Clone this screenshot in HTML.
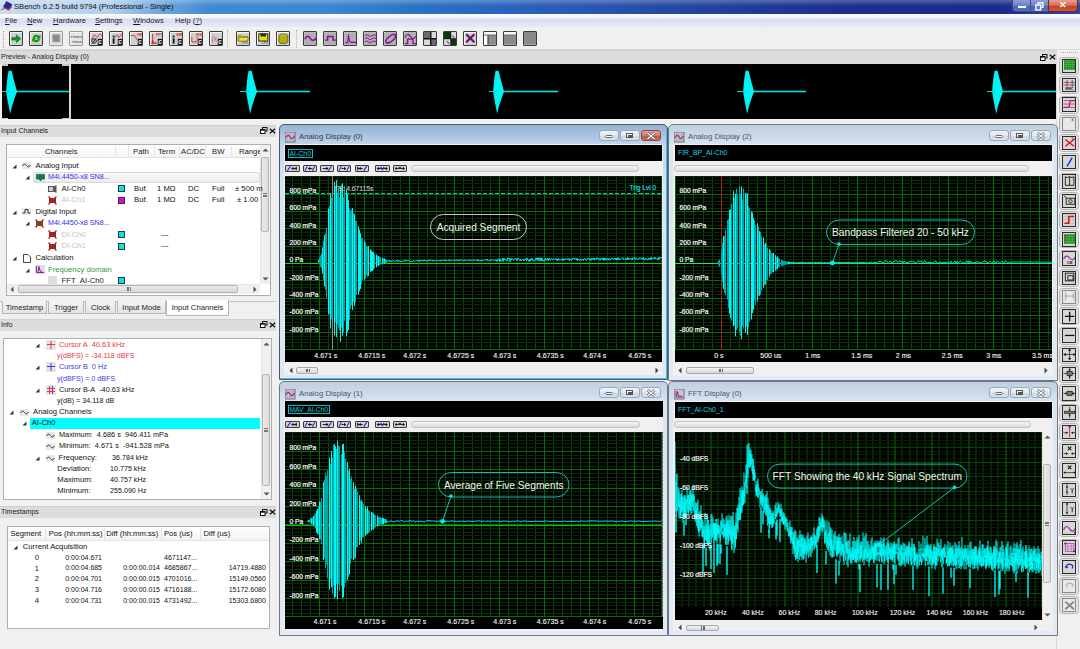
<!DOCTYPE html><html><head><meta charset="utf-8"><style>
html,body{margin:0;padding:0;}
body{width:1080px;height:649px;overflow:hidden;position:relative;background:#f0f0f0;font-family:"Liberation Sans", sans-serif;}
div{box-sizing:border-box;}
svg{position:absolute;}
</style></head><body>
<div style="position:absolute;left:0px;top:0px;width:1080px;height:13.5px;background:linear-gradient(90deg,#c8dcf0 0px,#b4d0ee 110px,#70a8de 160px,#3f8ad2 210px,#3a86d0 330px,#2a72c4 420px,#2a64c0 500px,#2a55b0 600px,#2244a0 700px,#1c2e90 850px,#1a2a8a 1000px,#3048a0 1080px);"></div>
<div style="position:absolute;left:0px;top:0px;width:1080px;height:6px;background:linear-gradient(180deg,rgba(255,255,255,0.25),rgba(255,255,255,0));"></div>
<svg style="left:1px;top:1px" width="12" height="11" viewBox="0 0 12 11"><rect x="3" y="1" width="7" height="7" transform="rotate(30 6 5)" fill="#2a2aa0"/><path d="M0 9 L4 7 L7 9 L11 6" stroke="#e03030" stroke-width="1" fill="none"/></svg>
<div style="position:absolute;left:14px;top:1.5px;font-size:7.6px;line-height:9.6px;color:#101010;white-space:nowrap;">SBench 6.2.5 build 9794 (Professional - Single)</div>
<div style="position:absolute;left:1012px;top:0px;width:66px;height:12px;border:1px solid #3a4a7a;border-top:none;border-radius:0 0 4px 4px;background:linear-gradient(180deg,#8e9ed8 0%,#6e80c8 50%,#4a5fb5 51%,#5a70c0 100%);"></div>
<div style="position:absolute;left:1048px;top:0px;width:30px;height:12px;border:1px solid #6a2a2a;border-top:none;border-radius:0 0 4px 0;background:linear-gradient(180deg,#e8a090 0%,#d86a55 50%,#c23a22 51%,#d05a40 100%);"></div>
<div style="position:absolute;left:1030px;top:0px;width:1px;height:11px;background:#3a4a7a;"></div>
<div style="position:absolute;left:1018px;top:6px;width:8px;height:2px;background:#fff;"></div>
<svg style="left:1035px;top:1.5px" width="9" height="9" viewBox="0 0 9 9"><rect x="3" y="0.8" width="5" height="4.5" fill="none" stroke="#fff" stroke-width="1.3"/><rect x="0.8" y="3" width="5" height="5" fill="#6a7ac4" stroke="#fff" stroke-width="1.3"/></svg>
<div style="position:absolute;left:963px;top:0.0px;width:200px;text-align:center;font-size:9px;line-height:11px;color:#fff;white-space:nowrap;font-weight:bold;">✕</div>
<div style="position:absolute;left:0px;top:13.5px;width:1080px;height:14.5px;background:linear-gradient(180deg,#fafbfd 0%,#f2f4fa 28%,#d8deef 42%,#dce2f2 60%,#e6eaf6 100%);border-bottom:1px solid #c8ccd6;"></div>
<div style="position:absolute;left:5px;top:15.5px;font-size:7.6px;line-height:9.6px;color:#1a1a1a;white-space:nowrap;"><u>F</u>ile</div>
<div style="position:absolute;left:27px;top:15.5px;font-size:7.6px;line-height:9.6px;color:#1a1a1a;white-space:nowrap;"><u>N</u>ew</div>
<div style="position:absolute;left:53px;top:15.5px;font-size:7.6px;line-height:9.6px;color:#1a1a1a;white-space:nowrap;"><u>H</u>ardware</div>
<div style="position:absolute;left:95px;top:15.5px;font-size:7.6px;line-height:9.6px;color:#1a1a1a;white-space:nowrap;"><u>S</u>ettings</div>
<div style="position:absolute;left:133px;top:15.5px;font-size:7.6px;line-height:9.6px;color:#1a1a1a;white-space:nowrap;"><u>W</u>indows</div>
<div style="position:absolute;left:175px;top:15.5px;font-size:7.6px;line-height:9.6px;color:#1a1a1a;white-space:nowrap;">Help (<u>?</u>)</div>
<div style="position:absolute;left:0px;top:27px;width:1080px;height:23px;background:#f0f0f0;border-bottom:1px solid #dadada;"></div>
<div style="position:absolute;left:3px;top:31px;width:1px;height:1px;background:#a0a0a0;"></div>
<div style="position:absolute;left:3px;top:33px;width:1px;height:1px;background:#a0a0a0;"></div>
<div style="position:absolute;left:3px;top:35px;width:1px;height:1px;background:#a0a0a0;"></div>
<div style="position:absolute;left:3px;top:37px;width:1px;height:1px;background:#a0a0a0;"></div>
<div style="position:absolute;left:3px;top:39px;width:1px;height:1px;background:#a0a0a0;"></div>
<div style="position:absolute;left:3px;top:41px;width:1px;height:1px;background:#a0a0a0;"></div>
<div style="position:absolute;left:3px;top:43px;width:1px;height:1px;background:#a0a0a0;"></div>
<div style="position:absolute;left:3px;top:45px;width:1px;height:1px;background:#a0a0a0;"></div>
<div style="position:absolute;left:3px;top:47px;width:1px;height:1px;background:#a0a0a0;"></div>
<div style="position:absolute;left:9px;top:31px;width:14px;height:15px;border:1px solid #3c3c3c;border-radius:1px;background:#d0d0d0;box-shadow:inset 1px 1px 0 #f4f4f4;overflow:hidden;"><svg style="left:-0.5px;top:-0.5px" width="12" height="13" viewBox="0 0 12 13"><g transform="scale(0.9)"><path d="M2 6 H7 V3 L12 7.5 L7 12 V9 H2Z" fill="#0a9a0a" stroke="#064" stroke-width="0.6"/></g></svg></div>
<div style="position:absolute;left:29px;top:31px;width:14px;height:15px;border:1px solid #3c3c3c;border-radius:1px;background:#d0d0d0;box-shadow:inset 1px 1px 0 #f4f4f4;overflow:hidden;"><svg style="left:-0.5px;top:-0.5px" width="12" height="13" viewBox="0 0 12 13"><g transform="scale(0.9)"><path d="M3 7 A4 4 0 0 1 10 4.5 L11.5 3 V7.5 H7 L8.6 5.9 A2.3 2.3 0 0 0 5 7Z" fill="#0a9a0a"/><path d="M11 7.5 A4 4 0 0 1 4 10 L2.5 11.5 V7 H7 L5.4 8.6 A2.3 2.3 0 0 0 9 7.5Z" fill="#0a9a0a"/></g></svg></div>
<div style="position:absolute;left:49px;top:31px;width:14px;height:15px;border:1px solid #9a9a9a;border-radius:1px;background:#e4e4e4;box-shadow:inset 1px 1px 0 #f4f4f4;overflow:hidden;"><svg style="left:-0.5px;top:-0.5px" width="12" height="13" viewBox="0 0 12 13"><g transform="scale(0.9)"><rect x="3" y="3" width="8" height="8" fill="#8a8a8a" stroke="#aaa"/></g></svg></div>
<div style="position:absolute;left:69px;top:31px;width:14px;height:15px;border:1px solid #9a9a9a;border-radius:1px;background:#e4e4e4;box-shadow:inset 1px 1px 0 #f4f4f4;overflow:hidden;"><svg style="left:-0.5px;top:-0.5px" width="12" height="13" viewBox="0 0 12 13"><g transform="scale(0.9)"><text x="0.5" y="6.5" font-size="4.6" fill="#777" font-family="Liberation Mono" font-weight="bold">FORCE</text><text x="2" y="12" font-size="4.6" fill="#777" font-family="Liberation Mono" font-weight="bold">TRIG</text></g></svg></div>
<div style="position:absolute;left:89px;top:31px;width:14px;height:15px;border:1px solid #3c3c3c;border-radius:1px;background:#d0d0d0;box-shadow:inset 1px 1px 0 #f4f4f4;overflow:hidden;"><svg style="left:-0.5px;top:-0.5px" width="12" height="13" viewBox="0 0 12 13"><g transform="scale(0.9)"><path d="M1 9 L5 3 L8 6 L11 2 L14 5" stroke="#e02020" fill="none" stroke-width="0.9"/><circle cx="4.5" cy="10" r="2.5" stroke="#111" fill="none" stroke-width="1"/><path d="M2 13 L7 7" stroke="#111"/><rect x="8" y="7" width="7" height="8" fill="#f0f0f0"/><rect x="8.5" y="7.5" width="6" height="7" fill="#111"/><text x="9.3" y="13.6" font-size="7" fill="#fff" font-family="Liberation Sans" font-weight="bold">c</text></g></svg></div>
<div style="position:absolute;left:109px;top:31px;width:14px;height:15px;border:1px solid #3c3c3c;border-radius:1px;background:#d0d0d0;box-shadow:inset 1px 1px 0 #f4f4f4;overflow:hidden;"><svg style="left:-0.5px;top:-0.5px" width="12" height="13" viewBox="0 0 12 13"><g transform="scale(0.9)"><path d="M5 7 L8 3 L10 6 L13 2" stroke="#e02020" fill="none" stroke-width="0.9"/><rect x="3" y="4" width="2" height="2" fill="#111"/><rect x="3" y="7" width="2" height="6" fill="#111"/><rect x="8" y="7" width="7" height="8" fill="#f0f0f0"/><rect x="8.5" y="7.5" width="6" height="7" fill="#111"/><text x="9.3" y="13.6" font-size="7" fill="#fff" font-family="Liberation Sans" font-weight="bold">c</text></g></svg></div>
<div style="position:absolute;left:129px;top:31px;width:14px;height:15px;border:1px solid #3c3c3c;border-radius:1px;background:#d0d0d0;box-shadow:inset 1px 1px 0 #f4f4f4;overflow:hidden;"><svg style="left:-0.5px;top:-0.5px" width="12" height="13" viewBox="0 0 12 13"><g transform="scale(0.9)"><path d="M1 4 H5 L9 10 H11" stroke="#e02020" fill="none" stroke-width="1"/><text x="8" y="4" font-size="3.5" fill="#e02020" font-family="Liberation Sans" font-weight="bold">FIR</text><rect x="8" y="7" width="7" height="8" fill="#f0f0f0"/><rect x="8.5" y="7.5" width="6" height="7" fill="#111"/><text x="9.3" y="13.6" font-size="7" fill="#fff" font-family="Liberation Sans" font-weight="bold">c</text></g></svg></div>
<div style="position:absolute;left:149px;top:31px;width:14px;height:15px;border:1px solid #3c3c3c;border-radius:1px;background:#d0d0d0;box-shadow:inset 1px 1px 0 #f4f4f4;overflow:hidden;"><svg style="left:-0.5px;top:-0.5px" width="12" height="13" viewBox="0 0 12 13"><g transform="scale(0.9)"><path d="M3 13 V2 M2 13 L3 9 L4 13Z M5 13 L6 11 L7 13" stroke="#e02020" fill="#e02020" stroke-width="1"/><text x="7" y="4" font-size="3.5" fill="#e02020" font-family="Liberation Sans" font-weight="bold">FFT</text><rect x="8" y="7" width="7" height="8" fill="#f0f0f0"/><rect x="8.5" y="7.5" width="6" height="7" fill="#111"/><text x="9.3" y="13.6" font-size="7" fill="#fff" font-family="Liberation Sans" font-weight="bold">c</text></g></svg></div>
<div style="position:absolute;left:169px;top:31px;width:14px;height:15px;border:1px solid #3c3c3c;border-radius:1px;background:#d0d0d0;box-shadow:inset 1px 1px 0 #f4f4f4;overflow:hidden;"><svg style="left:-0.5px;top:-0.5px" width="12" height="13" viewBox="0 0 12 13"><g transform="scale(0.9)"><rect x="3" y="4" width="2" height="2" fill="#111"/><rect x="3" y="7" width="2" height="6" fill="#111"/><text x="7" y="4" font-size="3.5" fill="#e02020" font-family="Liberation Sans" font-weight="bold">SMP</text><rect x="8" y="7" width="7" height="8" fill="#f0f0f0"/><rect x="8.5" y="7.5" width="6" height="7" fill="#111"/><text x="9.3" y="13.6" font-size="7" fill="#fff" font-family="Liberation Sans" font-weight="bold">c</text></g></svg></div>
<div style="position:absolute;left:189px;top:31px;width:14px;height:15px;border:1px solid #3c3c3c;border-radius:1px;background:#d0d0d0;box-shadow:inset 1px 1px 0 #f4f4f4;overflow:hidden;"><svg style="left:-0.5px;top:-0.5px" width="12" height="13" viewBox="0 0 12 13"><g transform="scale(0.9)"><path d="M2 5 V11 H8 V5" stroke="#e02020" fill="none" stroke-width="1"/><text x="7" y="4" font-size="3.5" fill="#e02020" font-family="Liberation Sans" font-weight="bold">HIST</text><rect x="8" y="7" width="7" height="8" fill="#f0f0f0"/><rect x="8.5" y="7.5" width="6" height="7" fill="#111"/><text x="9.3" y="13.6" font-size="7" fill="#fff" font-family="Liberation Sans" font-weight="bold">c</text></g></svg></div>
<div style="position:absolute;left:209px;top:31px;width:14px;height:15px;border:1px solid #3c3c3c;border-radius:1px;background:#d0d0d0;box-shadow:inset 1px 1px 0 #f4f4f4;overflow:hidden;"><svg style="left:-0.5px;top:-0.5px" width="12" height="13" viewBox="0 0 12 13"><g transform="scale(0.9)"><text x="2" y="10" font-size="8" fill="#e04040" font-family="Liberation Serif" font-style="italic">fx</text><rect x="8" y="7" width="7" height="8" fill="#f0f0f0"/><rect x="8.5" y="7.5" width="6" height="7" fill="#111"/><text x="9.3" y="13.6" font-size="7" fill="#fff" font-family="Liberation Sans" font-weight="bold">c</text></g></svg></div>
<div style="position:absolute;left:227px;top:30px;width:1px;height:18px;border-left:1px dotted #b0b0b0;"></div>
<div style="position:absolute;left:236px;top:31px;width:14px;height:15px;border:1px solid #3c3c3c;border-radius:1px;background:#d0d0d0;box-shadow:inset 1px 1px 0 #f4f4f4;overflow:hidden;"><svg style="left:-0.5px;top:-0.5px" width="12" height="13" viewBox="0 0 12 13"><g transform="scale(0.9)"><path d="M1 4 H5 L6 5 H12 V10 H1Z" fill="#d8c000" stroke="#6a5a00" stroke-width="0.6"/><path d="M1 10 L3 6 H13 L11 10Z" fill="#f0e040" stroke="#6a5a00" stroke-width="0.6"/><text x="5" y="13.5" font-size="3.5" fill="#333" font-family="Liberation Sans">CFG</text></g></svg></div>
<div style="position:absolute;left:256px;top:31px;width:14px;height:15px;border:1px solid #3c3c3c;border-radius:1px;background:#d0d0d0;box-shadow:inset 1px 1px 0 #f4f4f4;overflow:hidden;"><svg style="left:-0.5px;top:-0.5px" width="12" height="13" viewBox="0 0 12 13"><g transform="scale(0.9)"><rect x="2" y="2" width="10" height="8" fill="#e8e000" stroke="#222" stroke-width="1"/><rect x="4" y="2" width="6" height="3" fill="#222"/><text x="5" y="13.5" font-size="3.5" fill="#333" font-family="Liberation Sans">CFG</text></g></svg></div>
<div style="position:absolute;left:276px;top:31px;width:14px;height:15px;border:1px solid #3c3c3c;border-radius:1px;background:#d0d0d0;box-shadow:inset 1px 1px 0 #f4f4f4;overflow:hidden;"><svg style="left:-0.5px;top:-0.5px" width="12" height="13" viewBox="0 0 12 13"><g transform="scale(0.9)"><ellipse cx="7" cy="4" rx="5" ry="1.8" fill="#d8d020" stroke="#333" stroke-width="0.7"/><path d="M2 4 V11 A5 1.8 0 0 0 12 11 V4" fill="#b8b000" stroke="#333" stroke-width="0.7"/></g></svg></div>
<div style="position:absolute;left:296px;top:30px;width:1px;height:18px;border-left:1px dotted #b0b0b0;"></div>
<div style="position:absolute;left:303px;top:31px;width:14px;height:15px;border:1px solid #3c3c3c;border-radius:1px;background:#d0d0d0;box-shadow:inset 1px 1px 0 #f4f4f4;overflow:hidden;"><svg style="left:-0.5px;top:-0.5px" width="12" height="13" viewBox="0 0 12 13"><g transform="scale(0.9)"><rect x="0" y="0" width="15" height="15" fill="#c4c4c4"/><path d="M0 2.5H15M0 5H15M0 7.5H15M0 10H15M0 12.5H15M2.5 0V15M5 0V15M7.5 0V15M10 0V15M12.5 0V15" stroke="#8c8c8c" stroke-width="0.5"/><path d="M1 8 Q4 2 7 7 T14 6" stroke="#8a0a9a" fill="none" stroke-width="1.7"/></g></svg></div>
<div style="position:absolute;left:323px;top:31px;width:14px;height:15px;border:1px solid #3c3c3c;border-radius:1px;background:#d0d0d0;box-shadow:inset 1px 1px 0 #f4f4f4;overflow:hidden;"><svg style="left:-0.5px;top:-0.5px" width="12" height="13" viewBox="0 0 12 13"><g transform="scale(0.9)"><rect x="0" y="0" width="15" height="15" fill="#c4c4c4"/><path d="M0 2.5H15M0 5H15M0 7.5H15M0 10H15M0 12.5H15M2.5 0V15M5 0V15M7.5 0V15M10 0V15M12.5 0V15" stroke="#8c8c8c" stroke-width="0.5"/><path d="M1 9 H4 V5 H10 V9 H14" stroke="#8a0a9a" fill="none" stroke-width="1.6"/></g></svg></div>
<div style="position:absolute;left:343px;top:31px;width:14px;height:15px;border:1px solid #3c3c3c;border-radius:1px;background:#d0d0d0;box-shadow:inset 1px 1px 0 #f4f4f4;overflow:hidden;"><svg style="left:-0.5px;top:-0.5px" width="12" height="13" viewBox="0 0 12 13"><g transform="scale(0.9)"><rect x="0" y="0" width="15" height="15" fill="#c4c4c4"/><path d="M0 2.5H15M0 5H15M0 7.5H15M0 10H15M0 12.5H15M2.5 0V15M5 0V15M7.5 0V15M10 0V15M12.5 0V15" stroke="#8c8c8c" stroke-width="0.5"/><path d="M1 12 H4 L5 3 L6 10 L8 11.5 L14 11.5" stroke="#8a0a9a" fill="none" stroke-width="1.2"/></g></svg></div>
<div style="position:absolute;left:363px;top:31px;width:14px;height:15px;border:1px solid #3c3c3c;border-radius:1px;background:#d0d0d0;box-shadow:inset 1px 1px 0 #f4f4f4;overflow:hidden;"><svg style="left:-0.5px;top:-0.5px" width="12" height="13" viewBox="0 0 12 13"><g transform="scale(0.9)"><rect x="0" y="0" width="15" height="15" fill="#c4c4c4"/><path d="M0 2.5H15M0 5H15M0 7.5H15M0 10H15M0 12.5H15M2.5 0V15M5 0V15M7.5 0V15M10 0V15M12.5 0V15" stroke="#8c8c8c" stroke-width="0.5"/><path d="M1 4 Q3 2 5 4 T9 4 T14 4 M1 7.5 Q3 5.5 5 7.5 T9 7.5 T14 7.5 M1 11 Q3 9 5 11 T9 11 T14 11" stroke="#8a0a9a" fill="none" stroke-width="1"/></g></svg></div>
<div style="position:absolute;left:383px;top:31px;width:14px;height:15px;border:1px solid #3c3c3c;border-radius:1px;background:#d0d0d0;box-shadow:inset 1px 1px 0 #f4f4f4;overflow:hidden;"><svg style="left:-0.5px;top:-0.5px" width="12" height="13" viewBox="0 0 12 13"><g transform="scale(0.9)"><rect x="0" y="0" width="15" height="15" fill="#c4c4c4"/><path d="M0 2.5H15M0 5H15M0 7.5H15M0 10H15M0 12.5H15M2.5 0V15M5 0V15M7.5 0V15M10 0V15M12.5 0V15" stroke="#8c8c8c" stroke-width="0.5"/><ellipse cx="7.5" cy="7.5" rx="6.5" ry="2.8" transform="rotate(-40 7.5 7.5)" stroke="#8a0a9a" fill="none" stroke-width="1.6"/></g></svg></div>
<div style="position:absolute;left:403px;top:31px;width:14px;height:15px;border:1px solid #3c3c3c;border-radius:1px;background:#d0d0d0;box-shadow:inset 1px 1px 0 #f4f4f4;overflow:hidden;"><svg style="left:-0.5px;top:-0.5px" width="12" height="13" viewBox="0 0 12 13"><g transform="scale(0.9)"><rect x="0" y="0" width="15" height="15" fill="#c4c4c4"/><path d="M0 2.5H15M0 5H15M0 7.5H15M0 10H15M0 12.5H15M2.5 0V15M5 0V15M7.5 0V15M10 0V15M12.5 0V15" stroke="#8c8c8c" stroke-width="0.5"/><path d="M1 6 Q4 0 7 5 T14 4 M1 13 H4 V8 H10 V13 H14" stroke="#8a0a9a" fill="none" stroke-width="1.3"/></g></svg></div>
<div style="position:absolute;left:423px;top:31px;width:14px;height:15px;border:1px solid #3c3c3c;border-radius:1px;background:#d0d0d0;box-shadow:inset 1px 1px 0 #f4f4f4;overflow:hidden;"><svg style="left:-0.5px;top:-0.5px" width="12" height="13" viewBox="0 0 12 13"><g transform="scale(0.9)"><rect x="0" y="0" width="15" height="15" fill="#d8d8d8"/><rect x="0" y="0" width="7.5" height="7.5" fill="#6a6a6a"/><rect x="7.5" y="0" width="7.5" height="7.5" fill="#d8d8d8"/><rect x="0" y="7.5" width="7.5" height="7.5" fill="#d8d8d8"/><rect x="7.5" y="7.5" width="7.5" height="7.5" fill="#6a6a6a"/><path d="M7.5 0V15M0 7.5H15" stroke="#111" stroke-width="1.6"/></g></svg></div>
<div style="position:absolute;left:443px;top:31px;width:14px;height:15px;border:1px solid #3c3c3c;border-radius:1px;background:#d0d0d0;box-shadow:inset 1px 1px 0 #f4f4f4;overflow:hidden;"><svg style="left:-0.5px;top:-0.5px" width="12" height="13" viewBox="0 0 12 13"><g transform="scale(0.9)"><rect x="0" y="0" width="15" height="15" fill="#111"/><rect x="0" y="0" width="7" height="7" fill="#0a3a0a"/><rect x="8" y="8" width="7" height="7" fill="#0a3a0a"/><rect x="8" y="0" width="7" height="7" fill="#d8d8d8"/><rect x="0" y="8" width="7" height="7" fill="#d8d8d8"/><path d="M9 4 L12 7 M3 10 L6 13" stroke="#c040c0" stroke-width="1.4"/></g></svg></div>
<div style="position:absolute;left:463px;top:31px;width:14px;height:15px;border:1px solid #3c3c3c;border-radius:1px;background:#d0d0d0;box-shadow:inset 1px 1px 0 #f4f4f4;overflow:hidden;"><svg style="left:-0.5px;top:-0.5px" width="12" height="13" viewBox="0 0 12 13"><g transform="scale(0.9)"><path d="M2.5 2.5 L11.5 11.5 M11.5 2.5 L2.5 11.5" stroke="#6a106a" stroke-width="2.4"/></g></svg></div>
<div style="position:absolute;left:483px;top:31px;width:14px;height:15px;border:1px solid #3c3c3c;border-radius:1px;background:#d0d0d0;box-shadow:inset 1px 1px 0 #f4f4f4;overflow:hidden;"><svg style="left:-0.5px;top:-0.5px" width="12" height="13" viewBox="0 0 12 13"><g transform="scale(0.9)"><rect x="0" y="0" width="14" height="3" fill="#f8f8f8"/><rect x="0" y="3" width="14" height="1" fill="#333"/><rect x="0" y="4" width="4" height="10" fill="#fff"/><rect x="4" y="4" width="10" height="10" fill="#8a8a8a"/><rect x="4" y="4" width="1" height="10" fill="#333"/></g></svg></div>
<div style="position:absolute;left:503px;top:31px;width:14px;height:15px;border:1px solid #3c3c3c;border-radius:1px;background:#d0d0d0;box-shadow:inset 1px 1px 0 #f4f4f4;overflow:hidden;"><svg style="left:-0.5px;top:-0.5px" width="12" height="13" viewBox="0 0 12 13"><g transform="scale(0.9)"><rect x="0" y="0" width="14" height="3" fill="#f8f8f8"/><rect x="0" y="3" width="14" height="1" fill="#333"/><rect x="0" y="4" width="14" height="10" fill="#8a8a8a"/></g></svg></div>
<div style="position:absolute;left:523px;top:31px;width:14px;height:15px;border:1px solid #3c3c3c;border-radius:1px;background:#d0d0d0;box-shadow:inset 1px 1px 0 #f4f4f4;overflow:hidden;"><svg style="left:-0.5px;top:-0.5px" width="12" height="13" viewBox="0 0 12 13"><g transform="scale(0.9)"><rect x="0" y="0" width="14" height="14" fill="#8a8a8a"/></g></svg></div>
<div style="position:absolute;left:0px;top:50px;width:1056px;height:14px;background:#dcdcdc;border-top:1px solid #cfcfcf;"></div>
<div style="position:absolute;left:1px;top:52px;font-size:7px;line-height:9px;color:#222;white-space:nowrap;">Preview - Analog Display (0)</div>
<svg style="left:1040px;top:53.5px" width="8" height="7" viewBox="0 0 8 7"><rect x="2.5" y="0.5" width="4.5" height="3.5" fill="none" stroke="#111" stroke-width="1"/><rect x="0.5" y="2.5" width="4.5" height="4" fill="#fff" stroke="#111" stroke-width="1"/><rect x="1" y="2.5" width="3.5" height="1.2" fill="#111"/></svg>
<svg style="left:1048.5px;top:54.0px" width="7" height="6" viewBox="0 0 7 6"><path d="M0.8 0.8 L6.2 5.2 M6.2 0.8 L0.8 5.2" stroke="#111" stroke-width="1.3"/></svg>
<div style="position:absolute;left:2px;top:64px;width:1054px;height:55px;background:#000;"></div>
<div style="position:absolute;left:69px;top:64px;width:2px;height:55px;background:#d4d4d4;"></div>
<div style="position:absolute;left:62px;top:64px;width:7px;height:1.5px;background:#c8c8c8;"></div>
<div style="position:absolute;left:62px;top:117.5px;width:7px;height:1.5px;background:#c8c8c8;"></div>
<div style="position:absolute;left:2px;top:64px;width:6px;height:1.5px;background:#c8c8c8;"></div>
<div style="position:absolute;left:2px;top:117.5px;width:6px;height:1.5px;background:#c8c8c8;"></div>
<svg style="left:0;top:0" width="1080" height="649"><path d="M6.10 91.50 L6.80 83.50 L7.60 76.50 L8.60 70.80 L11.60 70.80 L14.50 82.50 L17.10 91.50 L14.50 98.50 L11.60 107.50 L10.20 113.70 L9.10 108.50 L7.40 99.50Z" fill="#00f4f4"/><rect x="16" y="90.7" width="53" height="1.6" fill="#00e0e0"/></svg>
<svg style="left:0;top:0" width="1080" height="649"><path d="M246.10 91.50 L246.80 83.50 L247.60 76.50 L248.60 70.80 L251.60 70.80 L254.50 82.50 L257.10 91.50 L254.50 98.50 L251.60 107.50 L250.20 113.70 L249.10 108.50 L247.40 99.50Z" fill="#00f4f4"/><rect x="256" y="90.7" width="54" height="1.6" fill="#00e0e0"/></svg>
<svg style="left:0;top:0" width="1080" height="649"><path d="M493.10 91.50 L493.80 83.50 L494.60 76.50 L495.60 70.80 L498.60 70.80 L501.50 82.50 L504.10 91.50 L501.50 98.50 L498.60 107.50 L497.20 113.70 L496.10 108.50 L494.40 99.50Z" fill="#00f4f4"/><rect x="503" y="90.7" width="55" height="1.6" fill="#00e0e0"/></svg>
<svg style="left:0;top:0" width="1080" height="649"><path d="M743.10 91.50 L743.80 83.50 L744.60 76.50 L745.60 70.80 L748.60 70.80 L751.50 82.50 L754.10 91.50 L751.50 98.50 L748.60 107.50 L747.20 113.70 L746.10 108.50 L744.40 99.50Z" fill="#00f4f4"/><rect x="753" y="90.7" width="53" height="1.6" fill="#00e0e0"/></svg>
<svg style="left:0;top:0" width="1080" height="649"><path d="M992.10 91.50 L992.80 83.50 L993.60 76.50 L994.60 70.80 L997.60 70.80 L1000.50 82.50 L1003.10 91.50 L1000.50 98.50 L997.60 107.50 L996.20 113.70 L995.10 108.50 L993.40 99.50Z" fill="#00f4f4"/><rect x="1002" y="90.7" width="54" height="1.6" fill="#00e0e0"/></svg>
<div style="position:absolute;left:2px;top:91px;width:8px;height:1.4px;background:#00d8d8;"></div>
<div style="position:absolute;left:240px;top:91px;width:10px;height:1.4px;background:#00d8d8;"></div>
<div style="position:absolute;left:489px;top:91px;width:8px;height:1.4px;background:#00d8d8;"></div>
<div style="position:absolute;left:737px;top:91px;width:10px;height:1.4px;background:#00d8d8;"></div>
<div style="position:absolute;left:987px;top:91px;width:9px;height:1.4px;background:#00d8d8;"></div>
<div style="position:absolute;left:1056px;top:50px;width:24px;height:599px;background:#f0f0f0;border-left:1px solid #d8d8d8;"></div>
<div style="position:absolute;left:1061px;top:52px;width:1px;height:1px;background:#a8a8a8;"></div>
<div style="position:absolute;left:1063px;top:52px;width:1px;height:1px;background:#a8a8a8;"></div>
<div style="position:absolute;left:1065px;top:52px;width:1px;height:1px;background:#a8a8a8;"></div>
<div style="position:absolute;left:1067px;top:52px;width:1px;height:1px;background:#a8a8a8;"></div>
<div style="position:absolute;left:1069px;top:52px;width:1px;height:1px;background:#a8a8a8;"></div>
<div style="position:absolute;left:1071px;top:52px;width:1px;height:1px;background:#a8a8a8;"></div>
<div style="position:absolute;left:1073px;top:52px;width:1px;height:1px;background:#a8a8a8;"></div>
<div style="position:absolute;left:1075px;top:52px;width:1px;height:1px;background:#a8a8a8;"></div>
<div style="position:absolute;left:1077px;top:52px;width:1px;height:1px;background:#a8a8a8;"></div>
<div style="position:absolute;left:1059px;top:57.00px;width:19.5px;height:18px;border:1.5px solid #b4b4b4;border-radius:3.5px;background:#e4e4e4;"></div>
<div style="position:absolute;left:1062px;top:58.80px;width:14.4px;height:14.4px;border:1px solid #2a2a2a;background:#d6d6d6;overflow:hidden"><svg style="left:-0.5px;top:-0.5px" width="16" height="14" viewBox="0 0 16 14"><g transform='scale(0.86) translate(-0.3 0)'><rect x="1.5" y="1.5" width="13" height="11" fill="#1a8a1a"/><path d="M1.5 4H14.5M1.5 6.5H14.5M1.5 9H14.5M4 1.5V12.5M6.5 1.5V12.5M9 1.5V12.5M11.5 1.5V12.5" stroke="#5ac85a" stroke-width="0.6"/></g></svg></div>
<div style="position:absolute;left:1059px;top:76.26px;width:19.5px;height:18px;border:1.5px solid #b4b4b4;border-radius:3.5px;background:#e4e4e4;"></div>
<div style="position:absolute;left:1062px;top:78.06px;width:14.4px;height:14.4px;border:1px solid #2a2a2a;background:#d6d6d6;overflow:hidden"><svg style="left:-0.5px;top:-0.5px" width="16" height="14" viewBox="0 0 16 14"><g transform='scale(0.86) translate(-0.3 0)'><path d="M1 4H15M1 7H15" stroke="#e02020" stroke-width="1"/><path d="M5 1V9M11 1V9" stroke="#2040e0" stroke-width="1"/><text x="3" y="13" font-size="4" fill="#111" font-family="Liberation Sans" font-weight="bold">MMC</text></g></svg></div>
<div style="position:absolute;left:1059px;top:95.52px;width:19.5px;height:18px;border:1.5px solid #b4b4b4;border-radius:3.5px;background:#e4e4e4;"></div>
<div style="position:absolute;left:1062px;top:97.32px;width:14.4px;height:14.4px;border:1px solid #2a2a2a;background:#d6d6d6;overflow:hidden"><svg style="left:-0.5px;top:-0.5px" width="16" height="14" viewBox="0 0 16 14"><g transform='scale(0.86) translate(-0.3 0)'><path d="M1 3H15M1 7H15M1 11H15" stroke="#e02020" stroke-width="0.9"/><path d="M1 11 H6 Q8 11 8 7 Q8 3 10 3 H15" stroke="#9020a0" stroke-width="1.4" fill="none"/></g></svg></div>
<div style="position:absolute;left:1059px;top:114.78px;width:19.5px;height:18px;border:1.5px solid #b4b4b4;border-radius:3.5px;background:#e4e4e4;"></div>
<div style="position:absolute;left:1062px;top:116.58px;width:14.4px;height:14.4px;border:1px solid #8a8a8a;background:#e8e8e8;overflow:hidden"><svg style="left:-0.5px;top:-0.5px" width="16" height="14" viewBox="0 0 16 14"><g transform='scale(0.86) translate(-0.3 0)'><path d="M11 2 L13 4 M11 2 L11 5" stroke="#333" stroke-width="0.8"/></g></svg></div>
<div style="position:absolute;left:1059px;top:134.04px;width:19.5px;height:18px;border:1.5px solid #b4b4b4;border-radius:3.5px;background:#e4e4e4;"></div>
<div style="position:absolute;left:1062px;top:135.84px;width:14.4px;height:14.4px;border:1px solid #2a2a2a;background:#d6d6d6;overflow:hidden"><svg style="left:-0.5px;top:-0.5px" width="16" height="14" viewBox="0 0 16 14"><g transform='scale(0.86) translate(-0.3 0)'><path d="M3 4 L13 12 M13 4 L3 12" stroke="#e01010" stroke-width="1.6"/><text x="10" y="5" font-size="4" fill="#111" font-family="Liberation Sans">Ya</text></g></svg></div>
<div style="position:absolute;left:1059px;top:153.30px;width:19.5px;height:18px;border:1.5px solid #b4b4b4;border-radius:3.5px;background:#e4e4e4;"></div>
<div style="position:absolute;left:1062px;top:155.10px;width:14.4px;height:14.4px;border:1px solid #2a2a2a;background:#d6d6d6;overflow:hidden"><svg style="left:-0.5px;top:-0.5px" width="16" height="14" viewBox="0 0 16 14"><g transform='scale(0.86) translate(-0.3 0)'><path d="M5 12 Q8 7 11 2" stroke="#1030e0" stroke-width="1.6" fill="none"/></g></svg></div>
<div style="position:absolute;left:1059px;top:172.56px;width:19.5px;height:18px;border:1.5px solid #b4b4b4;border-radius:3.5px;background:#e4e4e4;"></div>
<div style="position:absolute;left:1062px;top:174.36px;width:14.4px;height:14.4px;border:1px solid #2a2a2a;background:#d6d6d6;overflow:hidden"><svg style="left:-0.5px;top:-0.5px" width="16" height="14" viewBox="0 0 16 14"><g transform='scale(0.86) translate(-0.3 0)'><path d="M3 2 V12 H13 V2 M8 2 V12 M3 2 Q5 4 8 2 Q11 4 13 2" stroke="#111" stroke-width="1" fill="none"/></g></svg></div>
<div style="position:absolute;left:1059px;top:191.82px;width:19.5px;height:18px;border:1.5px solid #b4b4b4;border-radius:3.5px;background:#e4e4e4;"></div>
<div style="position:absolute;left:1062px;top:193.62px;width:14.4px;height:14.4px;border:1px solid #2a2a2a;background:#d6d6d6;overflow:hidden"><svg style="left:-0.5px;top:-0.5px" width="16" height="14" viewBox="0 0 16 14"><g transform='scale(0.86) translate(-0.3 0)'><path d="M2 2 L4 5 H14 V12 H4 V5" stroke="#111" stroke-width="1" fill="none"/><circle cx="9" cy="8.5" r="2" stroke="#111" fill="none"/></g></svg></div>
<div style="position:absolute;left:1059px;top:211.08px;width:19.5px;height:18px;border:1.5px solid #b4b4b4;border-radius:3.5px;background:#e4e4e4;"></div>
<div style="position:absolute;left:1062px;top:212.88px;width:14.4px;height:14.4px;border:1px solid #2a2a2a;background:#d6d6d6;overflow:hidden"><svg style="left:-0.5px;top:-0.5px" width="16" height="14" viewBox="0 0 16 14"><g transform='scale(0.86) translate(-0.3 0)'><path d="M1 4H15M1 8H15M1 12H15M4 1V14M8 1V14M12 1V14" stroke="#aaa" stroke-width="0.5"/><path d="M2 12 H7 V4 H13" stroke="#e01010" stroke-width="1.8" fill="none"/></g></svg></div>
<div style="position:absolute;left:1059px;top:230.34px;width:19.5px;height:18px;border:1.5px solid #b4b4b4;border-radius:3.5px;background:#e4e4e4;"></div>
<div style="position:absolute;left:1062px;top:232.14px;width:14.4px;height:14.4px;border:1px solid #2a2a2a;background:#d6d6d6;overflow:hidden"><svg style="left:-0.5px;top:-0.5px" width="16" height="14" viewBox="0 0 16 14"><g transform='scale(0.86) translate(-0.3 0)'><rect x="1.5" y="1.5" width="13" height="11" fill="#1a8a1a"/><path d="M1.5 4H14.5M1.5 7H14.5M1.5 10H14.5M5 1.5V12.5M8 1.5V12.5M11 1.5V12.5" stroke="#6ad86a" stroke-width="0.5"/><path d="M2 3 L4 5 M4 3 L2 5 M2 7 L4 9 M4 7 L2 9" stroke="#e01010" stroke-width="0.8"/></g></svg></div>
<div style="position:absolute;left:1059px;top:249.60px;width:19.5px;height:18px;border:1.5px solid #b4b4b4;border-radius:3.5px;background:#e4e4e4;"></div>
<div style="position:absolute;left:1062px;top:251.40px;width:14.4px;height:14.4px;border:1px solid #2a2a2a;background:#d6d6d6;overflow:hidden"><svg style="left:-0.5px;top:-0.5px" width="16" height="14" viewBox="0 0 16 14"><g transform='scale(0.86) translate(-0.3 0)'><path d="M1 8 Q4 2 8 7 T15 5" stroke="#9020a0" stroke-width="1.3" fill="none"/><text x="5" y="13.5" font-size="4" fill="#111" font-family="Liberation Sans" font-weight="bold">CM</text></g></svg></div>
<div style="position:absolute;left:1059px;top:268.86px;width:19.5px;height:18px;border:1.5px solid #b4b4b4;border-radius:3.5px;background:#e4e4e4;"></div>
<div style="position:absolute;left:1062px;top:270.66px;width:14.4px;height:14.4px;border:1px solid #2a2a2a;background:#d6d6d6;overflow:hidden"><svg style="left:-0.5px;top:-0.5px" width="16" height="14" viewBox="0 0 16 14"><g transform='scale(0.86) translate(-0.3 0)'><rect x="3" y="2.5" width="10" height="9" fill="none" stroke="#111" stroke-width="1"/><rect x="6" y="5.5" width="6" height="5" fill="none" stroke="#111" stroke-width="1"/></g></svg></div>
<div style="position:absolute;left:1059px;top:288.12px;width:19.5px;height:18px;border:1.5px solid #b4b4b4;border-radius:3.5px;background:#e4e4e4;"></div>
<div style="position:absolute;left:1062px;top:289.92px;width:14.4px;height:14.4px;border:1px solid #8a8a8a;background:#e8e8e8;overflow:hidden"><svg style="left:-0.5px;top:-0.5px" width="16" height="14" viewBox="0 0 16 14"><g transform='scale(0.86) translate(-0.3 0)'><path d="M3 7 H13 M3 7 L5 5.5 M3 7 L5 8.5 M13 7 L11 5.5 M13 7 L11 8.5 M3 2V12 M13 2V12" stroke="#999" stroke-width="0.8" fill="none"/></g></svg></div>
<div style="position:absolute;left:1059px;top:307.38px;width:19.5px;height:18px;border:1.5px solid #b4b4b4;border-radius:3.5px;background:#e4e4e4;"></div>
<div style="position:absolute;left:1062px;top:309.18px;width:14.4px;height:14.4px;border:1px solid #2a2a2a;background:#d6d6d6;overflow:hidden"><svg style="left:-0.5px;top:-0.5px" width="16" height="14" viewBox="0 0 16 14"><g transform='scale(0.86) translate(-0.3 0)'><path d="M8 2 V13 M2.5 7.5 H13.5" stroke="#111" stroke-width="1.5"/></g></svg></div>
<div style="position:absolute;left:1059px;top:326.64px;width:19.5px;height:18px;border:1.5px solid #b4b4b4;border-radius:3.5px;background:#e4e4e4;"></div>
<div style="position:absolute;left:1062px;top:328.44px;width:14.4px;height:14.4px;border:1px solid #2a2a2a;background:#d6d6d6;overflow:hidden"><svg style="left:-0.5px;top:-0.5px" width="16" height="14" viewBox="0 0 16 14"><g transform='scale(0.86) translate(-0.3 0)'><path d="M2.5 7.5 H13.5" stroke="#111" stroke-width="1.5"/></g></svg></div>
<div style="position:absolute;left:1059px;top:345.90px;width:19.5px;height:18px;border:1.5px solid #b4b4b4;border-radius:3.5px;background:#e4e4e4;"></div>
<div style="position:absolute;left:1062px;top:347.70px;width:14.4px;height:14.4px;border:1px solid #2a2a2a;background:#d6d6d6;overflow:hidden"><svg style="left:-0.5px;top:-0.5px" width="16" height="14" viewBox="0 0 16 14"><g transform='scale(0.86) translate(-0.3 0)'><path d="M8 1 V14 M1 7.5 H15" stroke="#111" stroke-width="0.8"/><path d="M8 1 L6 3.5 H10Z M8 14 L6 11.5 H10Z M1 7.5 L3.5 5.5 V9.5Z M15 7.5 L12.5 5.5 V9.5Z" fill="#111"/></g></svg></div>
<div style="position:absolute;left:1059px;top:365.16px;width:19.5px;height:18px;border:1.5px solid #b4b4b4;border-radius:3.5px;background:#e4e4e4;"></div>
<div style="position:absolute;left:1062px;top:366.96px;width:14.4px;height:14.4px;border:1px solid #2a2a2a;background:#d6d6d6;overflow:hidden"><svg style="left:-0.5px;top:-0.5px" width="16" height="14" viewBox="0 0 16 14"><g transform='scale(0.86) translate(-0.3 0)'><rect x="5" y="5" width="6" height="5" fill="#777" stroke="#111" stroke-width="0.8"/><path d="M8 1 V5 M8 10 V14 M1 7.5 H5 M11 7.5 H15" stroke="#111" stroke-width="0.8"/><path d="M8 5 L6.5 3 H9.5Z M8 10 L6.5 12 H9.5Z" fill="#111"/></g></svg></div>
<div style="position:absolute;left:1059px;top:384.42px;width:19.5px;height:18px;border:1.5px solid #b4b4b4;border-radius:3.5px;background:#e4e4e4;"></div>
<div style="position:absolute;left:1062px;top:386.22px;width:14.4px;height:14.4px;border:1px solid #2a2a2a;background:#d6d6d6;overflow:hidden"><svg style="left:-0.5px;top:-0.5px" width="16" height="14" viewBox="0 0 16 14"><g transform='scale(0.86) translate(-0.3 0)'><rect x="5" y="5" width="6" height="5" fill="#777" stroke="#111" stroke-width="0.8"/><path d="M1 7.5 H5 M11 7.5 H15" stroke="#111" stroke-width="0.8"/><path d="M5 7.5 L3 6 V9Z M11 7.5 L13 6 V9Z" fill="#111"/></g></svg></div>
<div style="position:absolute;left:1059px;top:403.68px;width:19.5px;height:18px;border:1.5px solid #b4b4b4;border-radius:3.5px;background:#e4e4e4;"></div>
<div style="position:absolute;left:1062px;top:405.48px;width:14.4px;height:14.4px;border:1px solid #2a2a2a;background:#d6d6d6;overflow:hidden"><svg style="left:-0.5px;top:-0.5px" width="16" height="14" viewBox="0 0 16 14"><g transform='scale(0.86) translate(-0.3 0)'><rect x="2" y="6" width="12" height="3" fill="#777" stroke="#111" stroke-width="0.6"/><path d="M8 1 V6 M8 9 V14" stroke="#111" stroke-width="0.8"/><path d="M8 6 L6.5 4 H9.5Z M8 9 L6.5 11 H9.5Z" fill="#111"/></g></svg></div>
<div style="position:absolute;left:1059px;top:422.94px;width:19.5px;height:18px;border:1.5px solid #b4b4b4;border-radius:3.5px;background:#e4e4e4;"></div>
<div style="position:absolute;left:1062px;top:424.74px;width:14.4px;height:14.4px;border:1px solid #2a2a2a;background:#d6d6d6;overflow:hidden"><svg style="left:-0.5px;top:-0.5px" width="16" height="14" viewBox="0 0 16 14"><g transform='scale(0.86) translate(-0.3 0)'><path d="M8 2 V14" stroke="#e01010" stroke-width="1"/><path d="M6 1 H10 L8 4Z" fill="#8020a0"/><path d="M1 9 H6 M10 9 H15" stroke="#111" stroke-width="0.8"/><path d="M6 9 L4 7.5 V10.5Z M10 9 L12 7.5 V10.5Z" fill="#111"/></g></svg></div>
<div style="position:absolute;left:1059px;top:442.20px;width:19.5px;height:18px;border:1.5px solid #b4b4b4;border-radius:3.5px;background:#e4e4e4;"></div>
<div style="position:absolute;left:1062px;top:444.00px;width:14.4px;height:14.4px;border:1px solid #2a2a2a;background:#d6d6d6;overflow:hidden"><svg style="left:-0.5px;top:-0.5px" width="16" height="14" viewBox="0 0 16 14"><g transform='scale(0.86) translate(-0.3 0)'><path d="M6 2 L10 6 M10 2 L6 6" stroke="#111" stroke-width="1.2"/><path d="M1 10 H6 M10 10 H15" stroke="#111" stroke-width="0.8"/><path d="M6 10 L4 8.5 V11.5Z M10 10 L12 8.5 V11.5Z" fill="#111"/></g></svg></div>
<div style="position:absolute;left:1059px;top:461.46px;width:19.5px;height:18px;border:1.5px solid #b4b4b4;border-radius:3.5px;background:#e4e4e4;"></div>
<div style="position:absolute;left:1062px;top:463.26px;width:14.4px;height:14.4px;border:1px solid #2a2a2a;background:#d6d6d6;overflow:hidden"><svg style="left:-0.5px;top:-0.5px" width="16" height="14" viewBox="0 0 16 14"><g transform='scale(0.86) translate(-0.3 0)'><path d="M6 2 L10 6 M10 2 L6 6" stroke="#111" stroke-width="1.2"/><path d="M1 10 H15" stroke="#111" stroke-width="0.8"/><path d="M1 10 L3 8.5 V11.5Z M15 10 L13 8.5 V11.5Z" fill="#111"/></g></svg></div>
<div style="position:absolute;left:1059px;top:480.72px;width:19.5px;height:18px;border:1.5px solid #b4b4b4;border-radius:3.5px;background:#e4e4e4;"></div>
<div style="position:absolute;left:1062px;top:482.52px;width:14.4px;height:14.4px;border:1px solid #2a2a2a;background:#d6d6d6;overflow:hidden"><svg style="left:-0.5px;top:-0.5px" width="16" height="14" viewBox="0 0 16 14"><g transform='scale(0.86) translate(-0.3 0)'><path d="M5 1 V14" stroke="#111" stroke-width="0.8"/><path d="M5 6 L3.5 4 H6.5Z M5 9 L3.5 11 H6.5Z" fill="#111"/><path d="M9 6 L11 8 L13 6 M11 8 V12" stroke="#111" stroke-width="1" fill="none"/></g></svg></div>
<div style="position:absolute;left:1059px;top:499.98px;width:19.5px;height:18px;border:1.5px solid #b4b4b4;border-radius:3.5px;background:#e4e4e4;"></div>
<div style="position:absolute;left:1062px;top:501.78px;width:14.4px;height:14.4px;border:1px solid #2a2a2a;background:#d6d6d6;overflow:hidden"><svg style="left:-0.5px;top:-0.5px" width="16" height="14" viewBox="0 0 16 14"><g transform='scale(0.86) translate(-0.3 0)'><path d="M5 1 V14" stroke="#111" stroke-width="0.8"/><path d="M5 1 L3.5 3 H6.5Z M5 14 L3.5 12 H6.5Z" fill="#111"/><path d="M9 6 L11 8 L13 6 M11 8 V12" stroke="#111" stroke-width="1" fill="none"/></g></svg></div>
<div style="position:absolute;left:1059px;top:519.24px;width:19.5px;height:18px;border:1.5px solid #b4b4b4;border-radius:3.5px;background:#e4e4e4;"></div>
<div style="position:absolute;left:1062px;top:521.04px;width:14.4px;height:14.4px;border:1px solid #2a2a2a;background:#d6d6d6;overflow:hidden"><svg style="left:-0.5px;top:-0.5px" width="16" height="14" viewBox="0 0 16 14"><g transform='scale(0.86) translate(-0.3 0)'><path d="M1 9 Q4 2 8 8 T15 7" stroke="#9020a0" stroke-width="1.3" fill="none"/><path d="M13 12 L15 12 L14 14Z" fill="#111"/></g></svg></div>
<div style="position:absolute;left:1059px;top:538.50px;width:19.5px;height:18px;border:1.5px solid #b4b4b4;border-radius:3.5px;background:#e4e4e4;"></div>
<div style="position:absolute;left:1062px;top:540.30px;width:14.4px;height:14.4px;border:1px solid #2a2a2a;background:#d6d6d6;overflow:hidden"><svg style="left:-0.5px;top:-0.5px" width="16" height="14" viewBox="0 0 16 14"><g transform='scale(0.86) translate(-0.3 0)'><rect x="3" y="3" width="10" height="9" fill="none" stroke="#c040c0" stroke-width="1"/><path d="M3 6H13M3 9H13M6 3V12M10 3V12" stroke="#c040c0" stroke-width="0.6"/><circle cx="3" cy="3" r="1.2" fill="#333"/><circle cx="13" cy="12" r="1.2" fill="#333"/></g></svg></div>
<div style="position:absolute;left:1059px;top:557.76px;width:19.5px;height:18px;border:1.5px solid #b4b4b4;border-radius:3.5px;background:#e4e4e4;"></div>
<div style="position:absolute;left:1062px;top:559.56px;width:14.4px;height:14.4px;border:1px solid #2a2a2a;background:#d6d6d6;overflow:hidden"><svg style="left:-0.5px;top:-0.5px" width="16" height="14" viewBox="0 0 16 14"><g transform='scale(0.86) translate(-0.3 0)'><path d="M4 9 Q4 4 9 5 Q13 6 11 10" stroke="#1030c0" stroke-width="1.4" fill="none"/><path d="M2 7 L4 10 L7 8Z" fill="#1030c0"/></g></svg></div>
<div style="position:absolute;left:1059px;top:577.02px;width:19.5px;height:18px;border:1.5px solid #b4b4b4;border-radius:3.5px;background:#e4e4e4;"></div>
<div style="position:absolute;left:1062px;top:578.82px;width:14.4px;height:14.4px;border:1px solid #8a8a8a;background:#e8e8e8;overflow:hidden"><svg style="left:-0.5px;top:-0.5px" width="16" height="14" viewBox="0 0 16 14"><g transform='scale(0.86) translate(-0.3 0)'><path d="M12 9 Q12 4 7 5 Q3 6 5 10" stroke="#aaa" stroke-width="1.2" fill="none"/></g></svg></div>
<div style="position:absolute;left:1059px;top:596.28px;width:19.5px;height:18px;border:1.5px solid #b4b4b4;border-radius:3.5px;background:#e4e4e4;"></div>
<div style="position:absolute;left:1062px;top:598.08px;width:14.4px;height:14.4px;border:1px solid #8a8a8a;background:#e8e8e8;overflow:hidden"><svg style="left:-0.5px;top:-0.5px" width="16" height="14" viewBox="0 0 16 14"><g transform='scale(0.86) translate(-0.3 0)'><path d="M3 3 L13 12 M13 3 L3 12" stroke="#888" stroke-width="2.2"/></g></svg></div>
<div style="position:absolute;left:0px;top:124.5px;width:276px;height:12px;background:#dcdcdc;border-top:1px solid #d0d0d0;"></div>
<div style="position:absolute;left:1px;top:125.7px;font-size:7px;line-height:9px;color:#222;white-space:nowrap;">Input Channels</div>
<svg style="left:260px;top:127.0px" width="8" height="7" viewBox="0 0 8 7"><rect x="2.5" y="0.5" width="4.5" height="3.5" fill="none" stroke="#111" stroke-width="1"/><rect x="0.5" y="2.5" width="4.5" height="4" fill="#fff" stroke="#111" stroke-width="1"/><rect x="1" y="2.5" width="3.5" height="1.2" fill="#111"/></svg>
<svg style="left:268.5px;top:127.5px" width="7" height="6" viewBox="0 0 7 6"><path d="M0.8 0.8 L6.2 5.2 M6.2 0.8 L0.8 5.2" stroke="#111" stroke-width="1.3"/></svg>
<div style="position:absolute;left:0px;top:318.5px;width:276px;height:12px;background:#dcdcdc;border-top:1px solid #d0d0d0;"></div>
<div style="position:absolute;left:1px;top:319.7px;font-size:7px;line-height:9px;color:#222;white-space:nowrap;">Info</div>
<svg style="left:260px;top:321.0px" width="8" height="7" viewBox="0 0 8 7"><rect x="2.5" y="0.5" width="4.5" height="3.5" fill="none" stroke="#111" stroke-width="1"/><rect x="0.5" y="2.5" width="4.5" height="4" fill="#fff" stroke="#111" stroke-width="1"/><rect x="1" y="2.5" width="3.5" height="1.2" fill="#111"/></svg>
<svg style="left:268.5px;top:321.5px" width="7" height="6" viewBox="0 0 7 6"><path d="M0.8 0.8 L6.2 5.2 M6.2 0.8 L0.8 5.2" stroke="#111" stroke-width="1.3"/></svg>
<div style="position:absolute;left:0px;top:506px;width:276px;height:12px;background:#dcdcdc;border-top:1px solid #d0d0d0;"></div>
<div style="position:absolute;left:1px;top:507.2px;font-size:7px;line-height:9px;color:#222;white-space:nowrap;">Timestamps</div>
<svg style="left:260px;top:508.5px" width="8" height="7" viewBox="0 0 8 7"><rect x="2.5" y="0.5" width="4.5" height="3.5" fill="none" stroke="#111" stroke-width="1"/><rect x="0.5" y="2.5" width="4.5" height="4" fill="#fff" stroke="#111" stroke-width="1"/><rect x="1" y="2.5" width="3.5" height="1.2" fill="#111"/></svg>
<svg style="left:268.5px;top:509.0px" width="7" height="6" viewBox="0 0 7 6"><path d="M0.8 0.8 L6.2 5.2 M6.2 0.8 L0.8 5.2" stroke="#111" stroke-width="1.3"/></svg>
<div style="position:absolute;left:6px;top:144px;width:265px;height:152px;background:#fff;border:1px solid #a9b0b8;"></div>
<div style="position:absolute;left:7px;top:145px;width:253px;height:13px;background:linear-gradient(180deg,#ffffff,#f4f4f4);border-bottom:1px solid #e2e2e2;"></div>
<div style="position:absolute;left:115px;top:146px;width:1px;height:11px;background:#e4e4e4;"></div>
<div style="position:absolute;left:128px;top:146px;width:1px;height:11px;background:#e4e4e4;"></div>
<div style="position:absolute;left:154px;top:146px;width:1px;height:11px;background:#e4e4e4;"></div>
<div style="position:absolute;left:179px;top:146px;width:1px;height:11px;background:#e4e4e4;"></div>
<div style="position:absolute;left:205px;top:146px;width:1px;height:11px;background:#e4e4e4;"></div>
<div style="position:absolute;left:231px;top:146px;width:1px;height:11px;background:#e4e4e4;"></div>
<div style="position:absolute;left:45px;top:147px;font-size:7.7px;line-height:9.7px;color:#222;white-space:nowrap;">Channels</div>
<div style="position:absolute;left:133px;top:147px;font-size:7.7px;line-height:9.7px;color:#222;white-space:nowrap;">Path</div>
<div style="position:absolute;left:158px;top:147px;font-size:7.7px;line-height:9.7px;color:#222;white-space:nowrap;">Term</div>
<div style="position:absolute;left:181px;top:147px;font-size:7.7px;line-height:9.7px;color:#222;white-space:nowrap;">AC/DC</div>
<div style="position:absolute;left:212px;top:147px;font-size:7.7px;line-height:9.7px;color:#222;white-space:nowrap;">BW</div>
<div style="position:absolute;left:239px;top:147px;font-size:7.7px;line-height:9.7px;color:#222;white-space:nowrap;">Range</div>
<div style="position:absolute;left:260px;top:145px;width:10px;height:139px;background:#f0f0f0;border-left:1px solid #e4e4e4;"></div>
<svg style="left:261.5px;top:148px" width="7" height="4" viewBox="0 0 7 4"><path d="M0.5 3.5 L3.5 0.5 L6.5 3.5Z" fill="#555"/></svg>
<svg style="left:261.5px;top:277px" width="7" height="4" viewBox="0 0 7 4"><path d="M0.5 0.5 L3.5 3.5 L6.5 0.5Z" fill="#555"/></svg>
<div style="position:absolute;left:261px;top:157px;width:8px;height:75px;background:linear-gradient(90deg,#eaeaea,#dcdcdc);border:1px solid #b4b4b4;border-radius:2px;"></div>
<div style="position:absolute;left:263px;top:193.0px;width:4px;height:0.8px;background:#777;"></div>
<div style="position:absolute;left:263px;top:194.5px;width:4px;height:0.8px;background:#777;"></div>
<div style="position:absolute;left:263px;top:196.0px;width:4px;height:0.8px;background:#777;"></div>
<div style="position:absolute;left:7px;top:284px;width:253px;height:10px;background:#f0f0f0;border-top:1px solid #e4e4e4;"></div>
<svg style="left:10px;top:285.5px" width="4" height="7" viewBox="0 0 4 7"><path d="M3.5 0.5 L0.5 3.5 L3.5 6.5Z" fill="#555"/></svg>
<svg style="left:253px;top:285.5px" width="4" height="7" viewBox="0 0 4 7"><path d="M0.5 0.5 L3.5 3.5 L0.5 6.5Z" fill="#555"/></svg>
<div style="position:absolute;left:18px;top:285px;width:220px;height:8px;background:linear-gradient(180deg,#eaeaea,#d8d8d8);border:1px solid #b4b4b4;border-radius:2px;"></div>
<div style="position:absolute;left:126.5px;top:287px;width:0.8px;height:4px;background:#777;"></div>
<div style="position:absolute;left:128.0px;top:287px;width:0.8px;height:4px;background:#777;"></div>
<div style="position:absolute;left:129.5px;top:287px;width:0.8px;height:4px;background:#777;"></div>
<svg style="left:12px;top:163.6px" width="5" height="5" viewBox="0 0 5 5"><path d="M4.5 0.5 V4.5 H0.5Z" fill="#333"/></svg>
<svg style="left:22px;top:162.1px" width="9" height="7" viewBox="0 0 9 7"><rect x="0" y="0" width="9" height="7" fill="#e8e8e8"/><path d="M0.5 4 Q2.5 0.5 4.5 3.5 T8.5 3" stroke="#333" stroke-width="1" fill="none"/></svg>
<div style="position:absolute;left:35.5px;top:160.6px;font-size:7.7px;line-height:9.7px;color:#111;white-space:nowrap;">Analog Input</div>
<div style="position:absolute;left:33px;top:171.5px;width:227px;height:11px;background:linear-gradient(180deg,#fafafa,#ececec);border:1px solid #dadada;border-radius:2px;"></div>
<svg style="left:25px;top:175px" width="5" height="5" viewBox="0 0 5 5"><path d="M4.5 0.5 V4.5 H0.5Z" fill="#333"/></svg>
<div style="position:absolute;left:35px;top:172px;width:10px;height:10px;background:#cfe3f7;"></div>
<svg style="left:35.5px;top:173.5px" width="9" height="7" viewBox="0 0 9 7"><path d="M0.5 0.5 H8.5 V5 H6 L5 6.5 H4 L3 5 H0.5Z" fill="#1a7a3a" stroke="#0a4a1a" stroke-width="0.5"/></svg>
<div style="position:absolute;left:48px;top:172px;font-size:7.7px;line-height:9.7px;color:#3030e8;white-space:nowrap;transform:scaleX(0.94);transform-origin:0 0;">M4i.4450-x8 SN8...</div>
<svg style="left:48px;top:184.7px" width="9" height="8" viewBox="0 0 9 8"><rect x="0.5" y="1.5" width="5" height="5" fill="#ccc" stroke="#333" stroke-width="0.8"/><path d="M5.5 1.5 L8.5 0 V8 L5.5 6.5" fill="#555"/></svg>
<div style="position:absolute;left:61.5px;top:183.7px;font-size:7.7px;line-height:9.7px;color:#111;white-space:nowrap;">AI-Ch0</div>
<div style="position:absolute;left:117.5px;top:185.2px;width:7px;height:7px;background:#00e8e8;border:1px solid #333;"></div>
<svg style="left:48px;top:195.5px" width="9" height="9" viewBox="0 0 9 9"><rect x="1" y="2" width="7" height="5" fill="#444"/><path d="M0.5 0.5 L8.5 8.5 M8.5 0.5 L0.5 8.5" stroke="#e01010" stroke-width="1.3"/></svg>
<div style="position:absolute;left:61.5px;top:195px;font-size:7.7px;line-height:9.7px;color:#c4c4c4;white-space:nowrap;">AI-Ch1</div>
<div style="position:absolute;left:117.5px;top:196.5px;width:7px;height:7px;background:#e800e8;border:1px solid #333;"></div>
<div style="position:absolute;left:134px;top:183.7px;font-size:7.7px;line-height:9.7px;color:#111;white-space:nowrap;">Buf.</div>
<div style="position:absolute;left:157px;top:183.7px;font-size:7.7px;line-height:9.7px;color:#111;white-space:nowrap;">1 MΩ</div>
<div style="position:absolute;left:188px;top:183.7px;font-size:7.7px;line-height:9.7px;color:#111;white-space:nowrap;">DC</div>
<div style="position:absolute;left:212px;top:183.7px;font-size:7.7px;line-height:9.7px;color:#111;white-space:nowrap;">Full</div>
<div style="position:absolute;left:134px;top:195px;font-size:7.7px;line-height:9.7px;color:#111;white-space:nowrap;">Buf.</div>
<div style="position:absolute;left:157px;top:195px;font-size:7.7px;line-height:9.7px;color:#111;white-space:nowrap;">1 MΩ</div>
<div style="position:absolute;left:188px;top:195px;font-size:7.7px;line-height:9.7px;color:#111;white-space:nowrap;">DC</div>
<div style="position:absolute;left:212px;top:195px;font-size:7.7px;line-height:9.7px;color:#111;white-space:nowrap;">Full</div>
<div style="position:absolute;left:235px;top:183.7px;font-size:7.7px;line-height:9.7px;color:#111;white-space:nowrap;">± 500 m</div>
<div style="position:absolute;left:237px;top:195px;font-size:7.7px;line-height:9.7px;color:#111;white-space:nowrap;">± 1.00</div>
<svg style="left:12px;top:209.8px" width="5" height="5" viewBox="0 0 5 5"><path d="M4.5 0.5 V4.5 H0.5Z" fill="#333"/></svg>
<svg style="left:22px;top:208.3px" width="9" height="7" viewBox="0 0 9 7"><rect x="0" y="0" width="9" height="7" fill="#e8e8e8"/><path d="M0.5 5 H3 V1.5 H6 V5 H8.5" stroke="#333" stroke-width="1" fill="none"/></svg>
<div style="position:absolute;left:35.5px;top:206.8px;font-size:7.7px;line-height:9.7px;color:#111;white-space:nowrap;">Digital Input</div>
<svg style="left:25px;top:221.2px" width="5" height="5" viewBox="0 0 5 5"><path d="M4.5 0.5 V4.5 H0.5Z" fill="#333"/></svg>
<svg style="left:35px;top:218.7px" width="9" height="9" viewBox="0 0 9 9"><rect x="1" y="2" width="7" height="5" fill="#1a7a3a"/><path d="M0.5 0.5 L8.5 8.5 M8.5 0.5 L0.5 8.5" stroke="#e01010" stroke-width="1.3"/></svg>
<div style="position:absolute;left:48px;top:218.2px;font-size:7.7px;line-height:9.7px;color:#3030e8;white-space:nowrap;transform:scaleX(0.94);transform-origin:0 0;">M4i.4450-x8 SN8...</div>
<svg style="left:48px;top:230.4px" width="9" height="9" viewBox="0 0 9 9"><rect x="1" y="2" width="7" height="5" fill="#444"/><path d="M0.5 0.5 L8.5 8.5 M8.5 0.5 L0.5 8.5" stroke="#e01010" stroke-width="1.3"/></svg>
<div style="position:absolute;left:61.5px;top:229.9px;font-size:7.7px;line-height:9.7px;color:#c4c4c4;white-space:nowrap;">DI-Ch0</div>
<div style="position:absolute;left:117.5px;top:231.4px;width:7px;height:7px;background:#00e8e8;border:1px solid #333;"></div>
<div style="position:absolute;left:161px;top:229.9px;font-size:7.7px;line-height:9.7px;color:#111;white-space:nowrap;">---</div>
<svg style="left:48px;top:241.8px" width="9" height="9" viewBox="0 0 9 9"><rect x="1" y="2" width="7" height="5" fill="#444"/><path d="M0.5 0.5 L8.5 8.5 M8.5 0.5 L0.5 8.5" stroke="#e01010" stroke-width="1.3"/></svg>
<div style="position:absolute;left:61.5px;top:241.3px;font-size:7.7px;line-height:9.7px;color:#c4c4c4;white-space:nowrap;">DI-Ch1</div>
<div style="position:absolute;left:117.5px;top:242.8px;width:7px;height:7px;background:#00e8e8;border:1px solid #333;"></div>
<div style="position:absolute;left:161px;top:241.3px;font-size:7.7px;line-height:9.7px;color:#111;white-space:nowrap;">---</div>
<svg style="left:12px;top:256px" width="5" height="5" viewBox="0 0 5 5"><path d="M4.5 0.5 V4.5 H0.5Z" fill="#333"/></svg>
<svg style="left:22.5px;top:253.5px" width="8" height="9" viewBox="0 0 8 9"><path d="M0.5 0.5 H5 L7.5 3 V8.5 H0.5Z" fill="#fff" stroke="#333" stroke-width="0.9"/></svg>
<div style="position:absolute;left:35.5px;top:253px;font-size:7.7px;line-height:9.7px;color:#111;white-space:nowrap;">Calculation</div>
<svg style="left:25px;top:267.7px" width="5" height="5" viewBox="0 0 5 5"><path d="M4.5 0.5 V4.5 H0.5Z" fill="#333"/></svg>
<svg style="left:35px;top:265.2px" width="10" height="9" viewBox="0 0 10 9"><rect x="0" y="0" width="10" height="9" fill="#ddd"/><path d="M1.5 1 V7.5 H9 M3 7 L4 1.5 L5 6 L7 6.5" stroke="#9020a0" stroke-width="1" fill="none"/></svg>
<div style="position:absolute;left:48px;top:264.7px;font-size:7.7px;line-height:9.7px;color:#3a9a3a;white-space:nowrap;">Frequency domain</div>
<div style="position:absolute;left:7px;top:275px;width:253px;height:9px;overflow:hidden;"></div>
<div style="position:absolute;left:7px;top:275px;width:253px;height:9px;overflow:hidden"><div style="position:absolute;left:41px;top:1px;width:9px;height:9px;background:#ddd"></div><div style="position:absolute;left:54.5px;top:0.8px;font-size:7.7px;line-height:9.7px;color:#222;white-space:nowrap">FFT_AI-Ch0</div><div style="position:absolute;left:110.5px;top:2.3px;width:7px;height:7px;background:#00e8e8;border:1px solid #333"></div></div>
<div style="position:absolute;left:0px;top:301px;width:276px;height:1px;background:#c4c4c4;"></div>
<div style="position:absolute;left:2px;top:301px;width:45px;height:13px;background:linear-gradient(180deg,#f4f4f4,#e4e4e4);border:1px solid #b8b8b8;border-top:none;"></div>
<div style="position:absolute;left:-75.5px;top:302.65px;width:200px;text-align:center;font-size:7.7px;line-height:9.7px;color:#222;white-space:nowrap;">Timestamp</div>
<div style="position:absolute;left:48px;top:301px;width:36px;height:13px;background:linear-gradient(180deg,#f4f4f4,#e4e4e4);border:1px solid #b8b8b8;border-top:none;"></div>
<div style="position:absolute;left:-34.0px;top:302.65px;width:200px;text-align:center;font-size:7.7px;line-height:9.7px;color:#222;white-space:nowrap;">Trigger</div>
<div style="position:absolute;left:85px;top:301px;width:31px;height:13px;background:linear-gradient(180deg,#f4f4f4,#e4e4e4);border:1px solid #b8b8b8;border-top:none;"></div>
<div style="position:absolute;left:0.5px;top:302.65px;width:200px;text-align:center;font-size:7.7px;line-height:9.7px;color:#222;white-space:nowrap;">Clock</div>
<div style="position:absolute;left:117px;top:301px;width:49px;height:13px;background:linear-gradient(180deg,#f4f4f4,#e4e4e4);border:1px solid #b8b8b8;border-top:none;"></div>
<div style="position:absolute;left:41.5px;top:302.65px;width:200px;text-align:center;font-size:7.7px;line-height:9.7px;color:#222;white-space:nowrap;">Input Mode</div>
<div style="position:absolute;left:166px;top:300px;width:63px;height:16px;background:#fff;border:1px solid #b8b8b8;border-top:none;"></div>
<div style="position:absolute;left:97.5px;top:303.15px;width:200px;text-align:center;font-size:7.7px;line-height:9.7px;color:#222;white-space:nowrap;">Input Channels</div>
<div style="position:absolute;left:3px;top:338px;width:269px;height:161.5px;background:#fff;border:1px solid #a9b0b8;"></div>
<div style="position:absolute;left:261px;top:339px;width:10px;height:159.5px;background:#f0f0f0;border-left:1px solid #e4e4e4;"></div>
<svg style="left:262.5px;top:342px" width="7" height="4" viewBox="0 0 7 4"><path d="M0.5 3.5 L3.5 0.5 L6.5 3.5Z" fill="#555"/></svg>
<svg style="left:262.5px;top:491.5px" width="7" height="4" viewBox="0 0 7 4"><path d="M0.5 0.5 L3.5 3.5 L6.5 0.5Z" fill="#555"/></svg>
<div style="position:absolute;left:262px;top:373.5px;width:8px;height:112.5px;background:linear-gradient(90deg,#eaeaea,#dcdcdc);border:1px solid #b4b4b4;border-radius:2px;"></div>
<div style="position:absolute;left:264px;top:428.25px;width:4px;height:0.8px;background:#777;"></div>
<div style="position:absolute;left:264px;top:429.75px;width:4px;height:0.8px;background:#777;"></div>
<div style="position:absolute;left:264px;top:431.25px;width:4px;height:0.8px;background:#777;"></div>
<svg style="left:35px;top:343px" width="5" height="5" viewBox="0 0 5 5"><path d="M4.5 0.5 V4.5 H0.5Z" fill="#333"/></svg>
<svg style="left:46px;top:340px" width="10" height="10" viewBox="0 0 10 10"><rect x="0" y="0" width="10" height="10" fill="#e4e4e4"/><path d="M5 1 V9" stroke="#e83a3a" stroke-width="1"/><path d="M1 4.5 H9" stroke="#e83a3a" stroke-width="1"/></svg>
<div style="position:absolute;left:58.5px;top:340px;font-size:7.7px;line-height:9.7px;color:#e83a3a;white-space:nowrap;transform:scaleX(0.96);transform-origin:0 0;">Cursor A&nbsp; 40.63 kHz</div>
<div style="position:absolute;left:57px;top:350.6px;font-size:7.7px;line-height:9.7px;color:#e83a3a;white-space:nowrap;transform:scaleX(0.925);transform-origin:0 0;">y(dBFS) = -34.118 dBFS</div>
<svg style="left:35px;top:365px" width="5" height="5" viewBox="0 0 5 5"><path d="M4.5 0.5 V4.5 H0.5Z" fill="#333"/></svg>
<svg style="left:46px;top:362px" width="10" height="10" viewBox="0 0 10 10"><rect x="0" y="0" width="10" height="10" fill="#e4e4e4"/><path d="M5 1 V9" stroke="#3a3ae8" stroke-width="1"/><path d="M1 4.5 H9" stroke="#3a3ae8" stroke-width="1"/></svg>
<div style="position:absolute;left:58.5px;top:362px;font-size:7.7px;line-height:9.7px;color:#3a3ae8;white-space:nowrap;transform:scaleX(0.95);transform-origin:0 0;">Cursor B&nbsp; 0 Hz</div>
<div style="position:absolute;left:57px;top:373.5px;font-size:7.7px;line-height:9.7px;color:#3a3ae8;white-space:nowrap;transform:scaleX(0.93);transform-origin:0 0;">y(dBFS) = 0 dBFS</div>
<svg style="left:35px;top:388px" width="5" height="5" viewBox="0 0 5 5"><path d="M4.5 0.5 V4.5 H0.5Z" fill="#333"/></svg>
<svg style="left:46px;top:385px" width="10" height="10" viewBox="0 0 10 10"><rect x="0" y="0" width="10" height="10" fill="#e4e4e4"/><path d="M3.5 1 V9" stroke="#e83a3a"/><path d="M6.5 1 V9" stroke="#3a3ae8"/><path d="M1 3.5 H9 M1 6.5 H9" stroke="#e83a3a"/></svg>
<div style="position:absolute;left:58.5px;top:385px;font-size:7.7px;line-height:9.7px;color:#111;white-space:nowrap;transform:scaleX(0.95);transform-origin:0 0;">Cursor B-A&nbsp; -40.63 kHz</div>
<div style="position:absolute;left:57px;top:396px;font-size:7.7px;line-height:9.7px;color:#111;white-space:nowrap;transform:scaleX(0.93);transform-origin:0 0;">y(dB) = 34.118 dB</div>
<svg style="left:9px;top:410px" width="5" height="5" viewBox="0 0 5 5"><path d="M4.5 0.5 V4.5 H0.5Z" fill="#333"/></svg>
<svg style="left:19.5px;top:408.5px" width="9" height="7" viewBox="0 0 9 7"><rect x="0" y="0" width="9" height="7" fill="#e8e8e8"/><path d="M0.5 4 Q2.5 0.5 4.5 3.5 T8.5 3" stroke="#333" stroke-width="1" fill="none"/></svg>
<div style="position:absolute;left:33px;top:407px;font-size:7.7px;line-height:9.7px;color:#111;white-space:nowrap;">Analog Channels</div>
<div style="position:absolute;left:29.6px;top:418px;width:230.4px;height:10.5px;background:#00ffff;"></div>
<svg style="left:22px;top:421px" width="5" height="5" viewBox="0 0 5 5"><path d="M4.5 0.5 V4.5 H0.5Z" fill="#333"/></svg>
<div style="position:absolute;left:31.7px;top:418px;font-size:7.7px;line-height:9.7px;color:#111;white-space:nowrap;">AI-Ch0</div>
<svg style="left:46px;top:431.5px" width="9" height="7" viewBox="0 0 9 7"><rect x="0" y="0" width="9" height="7" fill="#e8e8e8"/><path d="M0.5 4 Q2.5 0.5 4.5 3.5 T8.5 3" stroke="#333" stroke-width="1" fill="none"/></svg>
<div style="position:absolute;left:58.5px;top:430px;font-size:7.7px;line-height:9.7px;color:#111;white-space:nowrap;transform:scaleX(0.953);transform-origin:0 0;">Maximum:&nbsp; 4.686 s&nbsp; 946.411 mPa</div>
<svg style="left:46px;top:442.5px" width="9" height="7" viewBox="0 0 9 7"><rect x="0" y="0" width="9" height="7" fill="#e8e8e8"/><path d="M0.5 4 Q2.5 0.5 4.5 3.5 T8.5 3" stroke="#333" stroke-width="1" fill="none"/></svg>
<div style="position:absolute;left:58.5px;top:441px;font-size:7.7px;line-height:9.7px;color:#111;white-space:nowrap;transform:scaleX(0.953);transform-origin:0 0;">Minimum:&nbsp; 4.671 s&nbsp; -941.528 mPa</div>
<svg style="left:35px;top:456px" width="5" height="5" viewBox="0 0 5 5"><path d="M4.5 0.5 V4.5 H0.5Z" fill="#333"/></svg>
<svg style="left:46px;top:454.5px" width="9" height="7" viewBox="0 0 9 7"><rect x="0" y="0" width="9" height="7" fill="#e8e8e8"/><path d="M0.5 4 Q2.5 0.5 4.5 3.5 T8.5 3" stroke="#333" stroke-width="1" fill="none"/></svg>
<div style="position:absolute;left:58.5px;top:453px;font-size:7.7px;line-height:9.7px;color:#111;white-space:nowrap;">Frequency:</div>
<div style="position:absolute;left:111.5px;top:453px;font-size:7.7px;line-height:9.7px;color:#111;white-space:nowrap;transform:scaleX(0.93);transform-origin:0 0;">36.784 kHz</div>
<div style="position:absolute;left:57.3px;top:464px;font-size:7.7px;line-height:9.7px;color:#111;white-space:nowrap;">Deviation:</div>
<div style="position:absolute;left:110.3px;top:464px;font-size:7.7px;line-height:9.7px;color:#111;white-space:nowrap;transform:scaleX(0.93);transform-origin:0 0;">10.775 kHz</div>
<div style="position:absolute;left:57.3px;top:475px;font-size:7.7px;line-height:9.7px;color:#111;white-space:nowrap;">Maximum:</div>
<div style="position:absolute;left:110.3px;top:475px;font-size:7.7px;line-height:9.7px;color:#111;white-space:nowrap;transform:scaleX(0.93);transform-origin:0 0;">40.757 kHz</div>
<div style="position:absolute;left:57.3px;top:486px;font-size:7.7px;line-height:9.7px;color:#111;white-space:nowrap;">Minimum:</div>
<div style="position:absolute;left:110.3px;top:486px;font-size:7.7px;line-height:9.7px;color:#111;white-space:nowrap;transform:scaleX(0.93);transform-origin:0 0;">255.090 Hz</div>
<div style="position:absolute;left:7px;top:526px;width:263px;height:103px;background:#fff;border:1px solid #a9b0b8;"></div>
<div style="position:absolute;left:8px;top:527px;width:261px;height:14px;background:linear-gradient(180deg,#ffffff,#f3f3f3);border-bottom:1px solid #e2e2e2;"></div>
<div style="position:absolute;left:45.4px;top:528px;width:1px;height:12px;background:#e4e4e4;"></div>
<div style="position:absolute;left:103.7px;top:528px;width:1px;height:12px;background:#e4e4e4;"></div>
<div style="position:absolute;left:161.3px;top:528px;width:1px;height:12px;background:#e4e4e4;"></div>
<div style="position:absolute;left:200.2px;top:528px;width:1px;height:12px;background:#e4e4e4;"></div>
<div style="position:absolute;left:10.4px;top:529px;font-size:7.7px;line-height:9.7px;color:#111;white-space:nowrap;">Segment</div>
<div style="position:absolute;left:48.7px;top:529px;font-size:7.7px;line-height:9.7px;color:#111;white-space:nowrap;">Pos (hh:mm:ss)</div>
<div style="position:absolute;left:106.3px;top:529px;font-size:7.7px;line-height:9.7px;color:#111;white-space:nowrap;">Diff (hh:mm:ss)</div>
<div style="position:absolute;left:163.9px;top:529px;font-size:7.7px;line-height:9.7px;color:#111;white-space:nowrap;">Pos (us)</div>
<div style="position:absolute;left:203.5px;top:529px;font-size:7.7px;line-height:9.7px;color:#111;white-space:nowrap;">Diff (us)</div>
<svg style="left:13px;top:545px" width="5" height="5" viewBox="0 0 5 5"><path d="M4.5 0.5 V4.5 H0.5Z" fill="#333"/></svg>
<div style="position:absolute;left:22.8px;top:542px;font-size:7.7px;line-height:9.7px;color:#111;white-space:nowrap;">Current Acquisition</div>
<div style="position:absolute;left:-63px;top:552.65px;width:200px;text-align:center;font-size:7.7px;line-height:9.7px;color:#222;white-space:nowrap;">0</div>
<div style="position:absolute;left:-18.400000000000006px;top:552.5px;width:120px;text-align:right;font-size:7.7px;line-height:9.7px;color:#111;white-space:nowrap;transform:scaleX(0.905);transform-origin:100% 0">0:00:04.671</div>
<div style="position:absolute;left:39.5px;top:552.5px;width:120px;text-align:right;font-size:7.7px;line-height:9.7px;color:#111;white-space:nowrap;transform:scaleX(0.905);transform-origin:100% 0"></div>
<div style="position:absolute;left:163.9px;top:552.5px;font-size:7.7px;line-height:9.7px;color:#111;white-space:nowrap;transform:scaleX(0.92);transform-origin:0 0;">4671147...</div>
<div style="position:absolute;left:146.3px;top:552.5px;width:120px;text-align:right;font-size:7.7px;line-height:9.7px;color:#111;white-space:nowrap;transform:scaleX(0.92);transform-origin:100% 0"></div>
<div style="position:absolute;left:-63px;top:563.55px;width:200px;text-align:center;font-size:7.7px;line-height:9.7px;color:#222;white-space:nowrap;">1</div>
<div style="position:absolute;left:-18.400000000000006px;top:563.4px;width:120px;text-align:right;font-size:7.7px;line-height:9.7px;color:#111;white-space:nowrap;transform:scaleX(0.905);transform-origin:100% 0">0:00:04.685</div>
<div style="position:absolute;left:39.5px;top:563.4px;width:120px;text-align:right;font-size:7.7px;line-height:9.7px;color:#111;white-space:nowrap;transform:scaleX(0.905);transform-origin:100% 0">0:00:00.014</div>
<div style="position:absolute;left:163.9px;top:563.4px;font-size:7.7px;line-height:9.7px;color:#111;white-space:nowrap;transform:scaleX(0.92);transform-origin:0 0;">4685867...</div>
<div style="position:absolute;left:146.3px;top:563.4px;width:120px;text-align:right;font-size:7.7px;line-height:9.7px;color:#111;white-space:nowrap;transform:scaleX(0.92);transform-origin:100% 0">14719.4880</div>
<div style="position:absolute;left:-63px;top:574.4499999999999px;width:200px;text-align:center;font-size:7.7px;line-height:9.7px;color:#222;white-space:nowrap;">2</div>
<div style="position:absolute;left:-18.400000000000006px;top:574.3px;width:120px;text-align:right;font-size:7.7px;line-height:9.7px;color:#111;white-space:nowrap;transform:scaleX(0.905);transform-origin:100% 0">0:00:04.701</div>
<div style="position:absolute;left:39.5px;top:574.3px;width:120px;text-align:right;font-size:7.7px;line-height:9.7px;color:#111;white-space:nowrap;transform:scaleX(0.905);transform-origin:100% 0">0:00:00.015</div>
<div style="position:absolute;left:163.9px;top:574.3px;font-size:7.7px;line-height:9.7px;color:#111;white-space:nowrap;transform:scaleX(0.92);transform-origin:0 0;">4701016...</div>
<div style="position:absolute;left:146.3px;top:574.3px;width:120px;text-align:right;font-size:7.7px;line-height:9.7px;color:#111;white-space:nowrap;transform:scaleX(0.92);transform-origin:100% 0">15149.0560</div>
<div style="position:absolute;left:-63px;top:585.35px;width:200px;text-align:center;font-size:7.7px;line-height:9.7px;color:#222;white-space:nowrap;">3</div>
<div style="position:absolute;left:-18.400000000000006px;top:585.2px;width:120px;text-align:right;font-size:7.7px;line-height:9.7px;color:#111;white-space:nowrap;transform:scaleX(0.905);transform-origin:100% 0">0:00:04.716</div>
<div style="position:absolute;left:39.5px;top:585.2px;width:120px;text-align:right;font-size:7.7px;line-height:9.7px;color:#111;white-space:nowrap;transform:scaleX(0.905);transform-origin:100% 0">0:00:00.015</div>
<div style="position:absolute;left:163.9px;top:585.2px;font-size:7.7px;line-height:9.7px;color:#111;white-space:nowrap;transform:scaleX(0.92);transform-origin:0 0;">4716188...</div>
<div style="position:absolute;left:146.3px;top:585.2px;width:120px;text-align:right;font-size:7.7px;line-height:9.7px;color:#111;white-space:nowrap;transform:scaleX(0.92);transform-origin:100% 0">15172.6080</div>
<div style="position:absolute;left:-63px;top:596.25px;width:200px;text-align:center;font-size:7.7px;line-height:9.7px;color:#222;white-space:nowrap;">4</div>
<div style="position:absolute;left:-18.400000000000006px;top:596.1px;width:120px;text-align:right;font-size:7.7px;line-height:9.7px;color:#111;white-space:nowrap;transform:scaleX(0.905);transform-origin:100% 0">0:00:04.731</div>
<div style="position:absolute;left:39.5px;top:596.1px;width:120px;text-align:right;font-size:7.7px;line-height:9.7px;color:#111;white-space:nowrap;transform:scaleX(0.905);transform-origin:100% 0">0:00:00.015</div>
<div style="position:absolute;left:163.9px;top:596.1px;font-size:7.7px;line-height:9.7px;color:#111;white-space:nowrap;transform:scaleX(0.92);transform-origin:0 0;">4731492...</div>
<div style="position:absolute;left:146.3px;top:596.1px;width:120px;text-align:right;font-size:7.7px;line-height:9.7px;color:#111;white-space:nowrap;transform:scaleX(0.92);transform-origin:100% 0">15303.6800</div>
<div style="position:absolute;left:279px;top:124px;width:389px;height:256px;background:linear-gradient(180deg,#96b2d4 0px,#a8c2e0 10px,#c2d6ec 20px,#d4e4f4 60px,#dbe9f6 100%);border:1px solid #4b5a6e;box-shadow:inset -1px -1px 0 #3cc0e0;border-radius:5px 5px 0 0;"></div>
<div style="position:absolute;left:284px;top:144px;width:379px;height:231px;background:#f0f0f0;"></div>
<svg style="left:285px;top:132px" width="11" height="11" viewBox="0 0 11 11"><rect x="0" y="0" width="10" height="10" fill="#c8c8c8" stroke="#555" stroke-width="0.8"/><path d="M0 2.5H10M0 5H10M0 7.5H10M2.5 0V10M5 0V10M7.5 0V10" stroke="#999" stroke-width="0.4"/><path d="M0.5 6 Q3 1.5 5 5 T9.5 4" stroke="#a020a0" stroke-width="1.2" fill="none"/></svg>
<div style="position:absolute;left:299px;top:132.2px;font-size:7.8px;line-height:9.8px;color:#383848;white-space:nowrap;">Analog Display (0)</div>
<div style="position:absolute;left:598.5px;top:130px;width:20px;height:11px;background:linear-gradient(180deg,#f0f4fa 0%,#dfe7f1 50%,#cdd8e6 51%,#d8e2ee 100%);border:1px solid #9aa8b8;border-radius:3px;"></div>
<div style="position:absolute;left:619.5px;top:130px;width:20px;height:11px;background:linear-gradient(180deg,#f0f4fa 0%,#dfe7f1 50%,#cdd8e6 51%,#d8e2ee 100%);border:1px solid #9aa8b8;border-radius:3px;"></div>
<div style="position:absolute;left:640.5px;top:130px;width:20px;height:11px;background:linear-gradient(180deg,#e4a494 0%,#d4786a 50%,#c4503c 51%,#d06a58 100%);border:1px solid #8a4a3a;border-radius:3px;"></div>
<div style="position:absolute;left:605.0px;top:134.5px;width:7.5px;height:3.5px;background:#fff;border:1px solid #666;border-radius:1.5px;"></div>
<div style="position:absolute;left:626.0px;top:133px;width:7px;height:5px;background:#fff;border:1px solid #555;"></div>
<div style="position:absolute;left:627.5px;top:134.5px;width:4px;height:2px;background:#555;"></div>
<svg style="left:645.5px;top:131.5px" width="10" height="8" viewBox="0 0 10 8"><path d="M1.5 1 L8.5 7 M8.5 1 L1.5 7" stroke="#555" stroke-width="2.6"/><path d="M1.5 1 L8.5 7 M8.5 1 L1.5 7" stroke="#fff" stroke-width="1.4"/></svg>
<div style="position:absolute;left:285px;top:144.5px;width:377px;height:16px;background:#000;"></div>
<div style="position:absolute;left:288px;top:149.3px;width:24.6px;height:9px;border:1px solid #10b8c0;"></div>
<svg style="left:288px;top:149px" width="30" height="12" viewBox="0 0 30 12"><text x="1.5" y="7.3" font-size="7.6" fill="#18d0d8" font-family="Liberation Sans" textLength="21.5" lengthAdjust="spacingAndGlyphs">AI-Ch0</text></svg>
<div style="position:absolute;left:285.2px;top:165px;width:14.4px;height:7px;background:#d4d4d4;border:1px solid #3a3a3a;border-radius:1px;overflow:hidden;"><svg style="left:0;top:0" width="12.4" height="5" viewBox="0 0 14 7" preserveAspectRatio="none"><path d="M1.5 6.5 L5 0.5" stroke="#1a1ae8" stroke-width="1.3"/><path d="M6 3.5 H12" stroke="#111" stroke-width="1.2"/><path d="M10 3.5 L7.5 1 V6Z" fill="#111"/><path d="M11.5 1 V6" stroke="#111" stroke-width="1.3"/></svg></div>
<div style="position:absolute;left:303.0px;top:165px;width:13.7px;height:7px;background:#d4d4d4;border:1px solid #3a3a3a;border-radius:1px;overflow:hidden;"><svg style="left:0;top:0" width="11.7" height="5" viewBox="0 0 14 7" preserveAspectRatio="none"><path d="M1 6.5 L4 0.5 M10 6.5 L13 0.5" stroke="#1a1ae8" stroke-width="1.3"/><path d="M5 3.5 H10" stroke="#111" stroke-width="1.2"/><path d="M5 3.5 L7.5 1 V6Z" fill="#111"/></svg></div>
<div style="position:absolute;left:320.4px;top:165px;width:13.6px;height:7px;background:#d4d4d4;border:1px solid #3a3a3a;border-radius:1px;overflow:hidden;"><svg style="left:0;top:0" width="11.6" height="5" viewBox="0 0 14 7" preserveAspectRatio="none"><path d="M9 6.5 L12.5 0.5" stroke="#1a1ae8" stroke-width="1.3"/><path d="M2 3.5 H8" stroke="#111" stroke-width="1.2"/><path d="M9 3.5 L6.5 1 V6Z" fill="#111"/></svg></div>
<div style="position:absolute;left:337.4px;top:165px;width:14.1px;height:7px;background:#d4d4d4;border:1px solid #3a3a3a;border-radius:1px;overflow:hidden;"><svg style="left:0;top:0" width="12.1" height="5" viewBox="0 0 14 7" preserveAspectRatio="none"><path d="M1 6.5 L4 0.5 M10 6.5 L13 0.5" stroke="#1a1ae8" stroke-width="1.3"/><path d="M4 3.5 H9" stroke="#111" stroke-width="1.2"/><path d="M9.5 3.5 L7 1 V6Z" fill="#111"/></svg></div>
<div style="position:absolute;left:355.0px;top:165px;width:14px;height:7px;background:#d4d4d4;border:1px solid #3a3a3a;border-radius:1px;overflow:hidden;"><svg style="left:0;top:0" width="12.0" height="5" viewBox="0 0 14 7" preserveAspectRatio="none"><path d="M9 6.5 L12.5 0.5" stroke="#1a1ae8" stroke-width="1.3"/><path d="M2 3.5 H8" stroke="#111" stroke-width="1.2"/><path d="M3 3.5 L5.5 1 V6Z" fill="#111"/><path d="M2 1 V6" stroke="#111" stroke-width="1.3"/></svg></div>
<div style="position:absolute;left:375.0px;top:165px;width:14.6px;height:7px;background:#d4d4d4;border:1px solid #3a3a3a;border-radius:1px;overflow:hidden;"><svg style="left:0;top:0" width="12.6" height="5" viewBox="0 0 14 7" preserveAspectRatio="none"><path d="M1 3.5 H13" stroke="#111" stroke-width="1.2"/><path d="M4.5 3.5 L2 1 V6Z M9.5 3.5 L12 1 V6Z" fill="#111"/><path d="M5 1.5 L7 5 L9 1.5" stroke="#1a1ae8" stroke-width="1.4" fill="none"/></svg></div>
<div style="position:absolute;left:393.0px;top:165px;width:13.7px;height:7px;background:#d4d4d4;border:1px solid #3a3a3a;border-radius:1px;overflow:hidden;"><svg style="left:0;top:0" width="11.7" height="5" viewBox="0 0 14 7" preserveAspectRatio="none"><path d="M1 3.5 H13" stroke="#111" stroke-width="1.2"/><path d="M4.5 3.5 L2 1 V6Z M9.5 3.5 L12 1 V6Z" fill="#111"/><path d="M5.5 1 L7 3 L8.5 1" stroke="#1a1ae8" stroke-width="1.2" fill="none"/></svg></div>
<div style="position:absolute;left:410.7px;top:165px;width:228.3px;height:6.5px;background:linear-gradient(180deg,#f6f6f6,#dadada);border:1px solid #c4c4c4;border-radius:3px;"></div>
<svg style="left:285px;top:176px" width="377" height="174" viewBox="0 0 377 174"><rect x="0" y="0" width="377" height="174" fill="#000"/><path d="M7.5 0V174M16.5 0V174M25.5 0V174M43.5 0V174M52.5 0V174M61.5 0V174M70.5 0V174M88.5 0V174M97.5 0V174M106.5 0V174M115.5 0V174M133.5 0V174M142.5 0V174M151.5 0V174M160.5 0V174M178.5 0V174M187.5 0V174M196.5 0V174M205.5 0V174M223.5 0V174M232.5 0V174M241.5 0V174M250.5 0V174M268.5 0V174M277.5 0V174M286.5 0V174M295.5 0V174M313.5 0V174M322.5 0V174M331.5 0V174M340.5 0V174M358.5 0V174M367.5 0V174M376.5 0V174" stroke="#0c460c" stroke-width="1"/><path d="M0 0.5H377M0 4.5H377M0 7.5H377M0 11.5H377M0 14.5H377M0 21.5H377M0 25.5H377M0 28.5H377M0 32.5H377M0 38.5H377M0 42.5H377M0 45.5H377M0 49.5H377M0 56.5H377M0 59.5H377M0 63.5H377M0 66.5H377M0 73.5H377M0 77.5H377M0 80.5H377M0 83.5H377M0 90.5H377M0 94.5H377M0 97.5H377M0 101.5H377M0 108.5H377M0 111.5H377M0 115.5H377M0 118.5H377M0 125.5H377M0 128.5H377M0 132.5H377M0 135.5H377M0 142.5H377M0 146.5H377M0 149.5H377M0 153.5H377M0 160.5H377M0 163.5H377M0 166.5H377M0 170.5H377" stroke="#082c08" stroke-width="1"/><path d="M0 18.5H377M0 35.5H377M0 52.5H377M0 70.5H377M0 87.5H377M0 104.5H377M0 122.5H377M0 139.5H377M0 156.5H377M0 173.5H377" stroke="#007000" stroke-width="1"/><path d="M34.5 0V174M79.5 0V174M124.5 0V174M169.5 0V174M214.5 0V174M259.5 0V174M304.5 0V174M349.5 0V174" stroke="#007000" stroke-width="1"/><path d="M0 87.5H377" stroke="#00dc00" stroke-width="1"/><g transform="translate(-285 -176)"><path d="M332.5 176 V350" stroke="#8a8a8a" stroke-width="1"/><path d="M285 193.5 H662" stroke="#12c4b4" stroke-width="1" stroke-dasharray="4 2"/><path d="M319.5 257.6V264.4M320.5 255.4V266.8M321.5 253.5V268.2M323.5 240.6V280.1M325.5 233.0V289.9M326.5 228.0V297.6M329.5 206.0V313.6M331.5 197.7V319.0M332.5 200.3V318.6M335.5 186.6V322.4M337.5 192.6V324.3M338.5 186.2V327.8M339.5 197.8V330.5M341.5 184.5V327.6M343.5 197.4V332.5M344.5 186.1V321.0M349.5 208.3V320.1M350.5 210.6V308.8M351.5 209.5V305.6M353.5 213.2V301.9M355.5 220.9V302.1M356.5 221.0V295.0M361.5 238.1V284.1M362.5 237.9V280.2M365.5 242.6V278.8M366.5 245.7V275.0M367.5 246.7V276.7M374.5 254.4V268.3M377.5 255.7V265.7M379.5 256.7V265.3M380.5 257.2V264.6M383.5 258.1V263.8M385.5 258.9V262.8M386.5 259.4V262.8" stroke="#00a8a8" stroke-width="1"/><path d="M318.5 259.8V262.3M322.5 247.3V273.5M324.5 235.1V286.4M328.5 208.4V314.5M330.5 193.4V328.5M334.5 181.8V335.3M336.5 180.1V337.2M340.5 186.6V341.8M342.5 183.4V335.8M346.5 189.8V336.2M347.5 194.3V332.1M348.5 200.2V329.9M352.5 208.1V310.2M354.5 214.1V305.8M358.5 226.3V294.8M359.5 229.8V291.1M360.5 233.2V288.9M364.5 240.6V279.8M368.5 246.1V276.1M370.5 249.4V271.9M371.5 250.5V271.4M372.5 251.9V270.8M373.5 251.9V269.6M376.5 254.5V267.4M378.5 256.0V266.0M382.5 257.9V264.3M384.5 258.4V263.6" stroke="#00f8f8" stroke-width="1"/><path d="M386.0 260.6 L386.5 261.1 L387.0 260.8 L387.5 261.2 L388.0 261.2 L388.5 260.3 L389.0 260.2 L389.5 261.5 L390.0 260.6 L390.5 260.5 L391.0 261.7 L391.5 260.9 L392.0 261.5 L392.5 260.9 L393.0 261.2 L393.5 260.4 L394.0 261.1 L394.5 261.5 L395.0 261.0 L395.5 261.3 L396.0 261.2 L396.5 260.2 L397.0 261.3 L397.5 261.0 L398.0 260.6 L398.5 260.1 L399.0 261.5 L399.5 260.8 L400.0 261.2 L400.5 261.5 L401.0 261.2 L401.5 261.5 L402.0 260.7 L402.5 261.3 L403.0 260.8 L403.5 261.5 L404.0 261.4 L404.5 260.2 L405.0 260.2 L405.5 260.4 L406.0 261.6 L406.5 260.7 L407.0 261.0 L407.5 260.5 L408.0 260.8 L408.5 260.6 L409.0 260.6 L409.5 260.9 L410.0 260.9 L410.5 261.4 L411.0 261.1 L411.5 261.5 L412.0 261.3 L412.5 261.5 L413.0 261.0 L413.5 260.2 L414.0 261.3 L414.5 261.5 L415.0 261.4 L415.5 260.8 L416.0 261.1 L416.5 260.3 L417.0 261.2 L417.5 260.8 L418.0 260.4 L418.5 260.0 L419.0 261.3 L419.5 261.5 L420.0 260.0 L420.5 261.2 L421.0 260.5 L421.5 260.1 L422.0 260.3 L422.5 261.1 L423.0 261.3 L423.5 259.9 L424.0 260.8 L424.5 259.9 L425.0 261.0 L425.5 260.4 L426.0 261.2 L426.5 261.4 L427.0 260.6 L427.5 261.4 L428.0 260.3 L428.5 259.9 L429.0 260.8 L429.5 259.9 L430.0 260.1 L430.5 260.4 L431.0 260.8 L431.5 260.0 L432.0 259.9 L432.5 261.2 L433.0 260.3 L433.5 261.3 L434.0 261.2 L434.5 260.4 L435.0 260.5 L435.5 260.6 L436.0 260.8 L436.5 260.7 L437.0 260.6 L437.5 260.7 L438.0 261.2 L438.5 260.5 L439.0 260.4 L439.5 260.9 L440.0 260.1 L440.5 260.2 L441.0 261.3 L441.5 260.5 L442.0 260.6 L442.5 259.7 L443.0 260.3 L443.5 260.6 L444.0 259.7 L444.5 260.7 L445.0 260.7 L445.5 259.8 L446.0 260.7 L446.5 260.4 L447.0 260.7 L447.5 260.2 L448.0 260.8 L448.5 260.8 L449.0 259.7 L449.5 259.7 L450.0 260.7 L450.5 261.2 L451.0 260.0 L451.5 260.3 L452.0 260.6 L452.5 260.1 L453.0 260.2 L453.5 260.1 L454.0 260.2 L454.5 260.5 L455.0 260.1 L455.5 260.2 L456.0 260.8 L456.5 259.6 L457.0 260.5 L457.5 260.7 L458.0 260.0 L458.5 259.9 L459.0 260.8 L459.5 259.9 L460.0 259.8 L460.5 260.2 L461.0 260.6 L461.5 259.7 L462.0 260.0 L462.5 260.0 L463.0 260.8 L463.5 260.2 L464.0 260.9 L464.5 259.8 L465.0 260.0 L465.5 260.5 L466.0 260.9 L466.5 260.2 L467.0 259.8 L467.5 259.7 L468.0 260.3 L468.5 259.8 L469.0 260.7 L469.5 260.8 L470.0 259.7 L470.5 259.9 L471.0 260.7 L471.5 260.5 L472.0 260.7 L472.5 260.0 L473.0 259.6 L473.5 259.9 L474.0 260.7 L474.5 259.8 L475.0 259.9 L475.5 260.1 L476.0 260.1 L476.5 260.0 L477.0 260.8 L477.5 259.6 L478.0 259.4 L478.5 260.9 L479.0 260.8 L479.5 260.9 L480.0 260.0 L480.5 260.9 L481.0 260.8 L481.5 259.7 L482.0 260.5 L482.5 260.7 L483.0 260.4 L483.5 260.1 L484.0 259.8 L484.5 259.9 L485.0 259.7 L485.5 259.4 L486.0 260.2 L486.5 259.7 L487.0 260.6 L487.5 259.4 L488.0 260.7 L488.5 260.4 L489.0 260.7 L489.5 260.7 L490.0 260.7 L490.5 260.2 L491.0 259.3 L491.5 260.4 L492.0 259.5 L492.5 259.7 L493.0 260.3 L493.5 260.1 L494.0 259.9 L494.5 260.7 L495.0 260.2 L495.5 259.8 L496.0 259.6 L496.5 261.4 L497.0 259.9 L497.5 261.1 L498.0 259.4 L498.5 258.8 L499.0 260.1 L499.5 261.2 L500.0 258.7 L500.5 261.1 L501.0 261.6 L501.5 261.2 L502.0 261.2 L502.5 258.0 L503.0 260.5 L503.5 261.4 L504.0 258.1 L504.5 259.0 L505.0 259.0 L505.5 260.0 L506.0 259.6 L506.5 259.8 L507.0 261.0 L507.5 257.9 L508.0 258.1 L508.5 258.4 L509.0 258.4 L509.5 258.2 L510.0 261.8 L510.5 261.3 L511.0 258.2 L511.5 259.9 L512.0 259.1 L512.5 259.1 L513.0 259.3 L513.5 260.4 L514.0 260.2 L514.5 259.3 L515.0 258.6 L515.5 259.1 L516.0 258.3 L516.5 260.0 L517.0 260.7 L517.5 259.3 L518.0 258.1 L518.5 258.5 L519.0 259.3 L519.5 260.2 L520.0 260.9 L520.5 259.3 L521.0 261.0 L521.5 260.3 L522.0 259.5 L522.5 259.3 L523.0 259.7 L523.5 260.6 L524.0 259.4 L524.5 260.5 L525.0 259.6 L525.5 258.7 L526.0 259.9 L526.5 260.5 L527.0 258.0 L527.5 259.4 L528.0 259.4 L528.5 261.2 L529.0 261.5 L529.5 259.2 L530.0 261.3 L530.5 260.9 L531.0 258.7 L531.5 259.5 L532.0 258.2 L532.5 260.9 L533.0 260.3 L533.5 261.2 L534.0 260.8 L534.5 260.3 L535.0 260.6 L535.5 259.9 L536.0 258.1 L536.5 260.0 L537.0 257.7 L537.5 258.2 L538.0 260.7 L538.5 257.8 L539.0 258.0 L539.5 258.0 L540.0 261.1 L540.5 258.3 L541.0 257.7 L541.5 261.0 L542.0 258.1 L542.5 261.0 L543.0 260.3 L543.5 260.9 L544.0 261.4 L544.5 259.9 L545.0 260.0 L545.5 258.2 L546.0 260.4 L546.5 259.6 L547.0 260.2 L547.5 258.4 L548.0 260.3 L548.5 260.8 L549.0 258.2 L549.5 259.0 L550.0 259.7 L550.5 260.5 L551.0 258.7 L551.5 258.5 L552.0 258.7 L552.5 259.8 L553.0 260.2 L553.5 259.2 L554.0 259.1 L554.5 259.2 L555.0 259.0 L555.5 259.2 L556.0 258.2 L556.5 259.5 L557.0 260.9 L557.5 259.2 L558.0 260.2 L558.5 258.4 L559.0 260.0 L559.5 260.2 L560.0 259.9 L560.5 259.5 L561.0 259.4 L561.5 259.8 L562.0 260.6 L562.5 258.3 L563.0 258.2 L563.5 260.1 L564.0 260.6 L564.5 259.4 L565.0 259.2 L565.5 260.0 L566.0 258.4 L566.5 258.7 L567.0 258.5 L567.5 259.6 L568.0 258.8 L568.5 258.5 L569.0 259.9 L569.5 260.7 L570.0 258.7 L570.5 259.9 L571.0 259.1 L571.5 260.4 L572.0 259.6 L572.5 258.6 L573.0 258.5 L573.5 257.9 L574.0 259.2 L574.5 258.9 L575.0 258.3 L575.5 258.9 L576.0 258.7 L576.5 260.1 L577.0 258.2 L577.5 260.7 L578.0 259.2 L578.5 259.6 L579.0 259.2 L579.5 260.3 L580.0 260.2 L580.5 259.4 L581.0 259.2 L581.5 259.9 L582.0 260.3 L582.5 258.9 L583.0 259.9 L583.5 260.6 L584.0 259.1 L584.5 258.4 L585.0 258.4 L585.5 259.8 L586.0 259.7 L586.5 260.6 L587.0 260.2 L587.5 258.4 L588.0 258.2 L588.5 258.4 L589.0 258.2 L589.5 259.8 L590.0 260.2 L590.5 260.3 L591.0 258.4 L591.5 260.2 L592.0 258.6 L592.5 258.9 L593.0 259.8 L593.5 257.9 L594.0 257.9 L594.5 260.1 L595.0 258.5 L595.5 258.7 L596.0 259.3 L596.5 259.6 L597.0 257.6 L597.5 258.6 L598.0 258.9 L598.5 259.0 L599.0 258.2 L599.5 259.3 L600.0 260.4 L600.5 258.7 L601.0 259.2 L601.5 257.9 L602.0 258.4 L602.5 259.5 L603.0 257.9 L603.5 260.2 L604.0 260.3 L604.5 257.8 L605.0 260.3 L605.5 258.6 L606.0 259.8 L606.5 259.8 L607.0 258.4 L607.5 259.5 L608.0 259.5 L608.5 259.9 L609.0 258.3 L609.5 259.7 L610.0 260.4 L610.5 259.5 L611.0 259.1 L611.5 257.8 L612.0 258.9 L612.5 258.5 L613.0 259.6 L613.5 259.5 L614.0 259.1 L614.5 258.0 L615.0 259.4 L615.5 259.3 L616.0 258.0 L616.5 260.1 L617.0 259.4 L617.5 257.8 L618.0 260.2 L618.5 257.8 L619.0 258.4 L619.5 259.5 L620.0 259.2 L620.5 259.0 L621.0 259.3 L621.5 258.7 L622.0 258.3 L622.5 257.9 L623.0 257.6 L623.5 259.5 L624.0 259.6 L624.5 259.0 L625.0 259.6 L625.5 258.4 L626.0 258.1 L626.5 258.5 L627.0 259.9 L627.5 257.4 L628.0 258.8 L628.5 258.0 L629.0 259.6 L629.5 258.4 L630.0 258.3 L630.5 258.5 L631.0 258.9 L631.5 259.6 L632.0 258.3 L632.5 259.8 L633.0 257.6 L633.5 258.1 L634.0 257.6 L634.5 257.6 L635.0 259.6 L635.5 259.4 L636.0 257.8 L636.5 257.8 L637.0 258.5 L637.5 259.5 L638.0 259.7 L638.5 259.5 L639.0 259.0 L639.5 257.6 L640.0 258.4 L640.5 257.8 L641.0 258.8 L641.5 258.9 L642.0 257.8 L642.5 257.9 L643.0 259.5 L643.5 257.3 L644.0 259.6 L644.5 259.8 L645.0 260.0 L645.5 258.3 L646.0 258.8 L646.5 258.9 L647.0 259.0 L647.5 260.1 L648.0 259.2 L648.5 258.0 L649.0 259.7 L649.5 258.6 L650.0 258.9 L650.5 259.3 L651.0 257.1 L651.5 259.4 L652.0 259.1 L652.5 258.6 L653.0 258.7 L653.5 258.5 L654.0 257.7 L654.5 258.7 L655.0 257.2 L655.5 258.6 L656.0 259.0 L656.5 258.4 L657.0 258.7 L657.5 259.9 L658.0 259.7 L658.5 257.4 L659.0 259.4 L659.5 258.9 L660.0 257.2 L660.5 258.1 L661.0 257.7 L661.5 257.2 L662.0 258.6" stroke="#00f0f0" stroke-width="1.0" fill="none" stroke-opacity="1"/><text x="289.5" y="193.10000000000002" font-size="7.2" fill="#f8f8f8" font-family="Liberation Sans" text-anchor="start" textLength="26.8" lengthAdjust="spacingAndGlyphs" stroke="#f8f8f8" stroke-width="0.2">800 mPa</text><text x="289.5" y="210.4" font-size="7.2" fill="#f8f8f8" font-family="Liberation Sans" text-anchor="start" textLength="26.8" lengthAdjust="spacingAndGlyphs" stroke="#f8f8f8" stroke-width="0.2">600 mPa</text><text x="289.5" y="227.70000000000002" font-size="7.2" fill="#f8f8f8" font-family="Liberation Sans" text-anchor="start" textLength="26.8" lengthAdjust="spacingAndGlyphs" stroke="#f8f8f8" stroke-width="0.2">400 mPa</text><text x="289.5" y="245.0" font-size="7.2" fill="#f8f8f8" font-family="Liberation Sans" text-anchor="start" textLength="26.8" lengthAdjust="spacingAndGlyphs" stroke="#f8f8f8" stroke-width="0.2">200 mPa</text><text x="289.5" y="262.3" font-size="7.2" fill="#f8f8f8" font-family="Liberation Sans" text-anchor="start" textLength="13.8" lengthAdjust="spacingAndGlyphs" stroke="#f8f8f8" stroke-width="0.2">0 Pa</text><text x="289.5" y="279.6" font-size="7.2" fill="#f8f8f8" font-family="Liberation Sans" text-anchor="start" textLength="29.0" lengthAdjust="spacingAndGlyphs" stroke="#f8f8f8" stroke-width="0.2">-200 mPa</text><text x="289.5" y="296.90000000000003" font-size="7.2" fill="#f8f8f8" font-family="Liberation Sans" text-anchor="start" textLength="29.0" lengthAdjust="spacingAndGlyphs" stroke="#f8f8f8" stroke-width="0.2">-400 mPa</text><text x="289.5" y="314.2" font-size="7.2" fill="#f8f8f8" font-family="Liberation Sans" text-anchor="start" textLength="29.0" lengthAdjust="spacingAndGlyphs" stroke="#f8f8f8" stroke-width="0.2">-600 mPa</text><text x="289.5" y="331.50000000000006" font-size="7.2" fill="#f8f8f8" font-family="Liberation Sans" text-anchor="start" textLength="29.0" lengthAdjust="spacingAndGlyphs" stroke="#f8f8f8" stroke-width="0.2">-800 mPa</text><text x="334" y="190.5" font-size="7.2" fill="#c0c0c0" font-family="Liberation Sans" text-anchor="start" textLength="39.3" lengthAdjust="spacingAndGlyphs" stroke="#c0c0c0" stroke-width="0.15">TS: 4.67115s</text><text x="656" y="190" font-size="7" fill="#18e0e0" font-family="Liberation Sans" text-anchor="end" textLength="26.5" lengthAdjust="spacingAndGlyphs" stroke="#18e0e0" stroke-width="0.15">Trig Lvl 0</text><rect x="430.5" y="214.5" width="96" height="25" rx="13.0" ry="13.0" fill="none" stroke="#c4c4c4" stroke-width="1"/><text x="478.5" y="230.96" font-size="11" fill="#f4f4f4" font-family="Liberation Sans" text-anchor="middle" textLength="83.7" lengthAdjust="spacingAndGlyphs">Acquired Segment</text></g></svg>
<div style="position:absolute;left:285px;top:350px;width:377px;height:11.7px;background:#000;"></div>
<svg style="left:0;top:0" width="1080" height="649"><text x="325.8" y="357.6" font-size="7" fill="#f4f4f4" font-family="Liberation Sans" text-anchor="middle" stroke="#f4f4f4" stroke-width="0.12">4.671 s</text><text x="371.8" y="357.6" font-size="7" fill="#f4f4f4" font-family="Liberation Sans" text-anchor="middle" stroke="#f4f4f4" stroke-width="0.12">4.6715 s</text><text x="414.8" y="357.6" font-size="7" fill="#f4f4f4" font-family="Liberation Sans" text-anchor="middle" stroke="#f4f4f4" stroke-width="0.12">4.672 s</text><text x="460.8" y="357.6" font-size="7" fill="#f4f4f4" font-family="Liberation Sans" text-anchor="middle" stroke="#f4f4f4" stroke-width="0.12">4.6725 s</text><text x="504.8" y="357.6" font-size="7" fill="#f4f4f4" font-family="Liberation Sans" text-anchor="middle" stroke="#f4f4f4" stroke-width="0.12">4.673 s</text><text x="550.3" y="357.6" font-size="7" fill="#f4f4f4" font-family="Liberation Sans" text-anchor="middle" stroke="#f4f4f4" stroke-width="0.12">4.6735 s</text><text x="594.8" y="357.6" font-size="7" fill="#f4f4f4" font-family="Liberation Sans" text-anchor="middle" stroke="#f4f4f4" stroke-width="0.12">4.674 s</text><text x="639.8" y="357.6" font-size="7" fill="#f4f4f4" font-family="Liberation Sans" text-anchor="middle" stroke="#f4f4f4" stroke-width="0.12">4.675 s</text></svg>
<svg style="left:288.5px;top:366.5px" width="4" height="7" viewBox="0 0 4 7"><path d="M3.5 0.5 L0.5 3.5 L3.5 6.5Z" fill="#444"/></svg>
<svg style="left:654.5px;top:366.5px" width="4" height="7" viewBox="0 0 4 7"><path d="M0.5 0.5 L3.5 3.5 L0.5 6.5Z" fill="#444"/></svg>
<div style="position:absolute;left:296px;top:367px;width:22px;height:6.5px;background:linear-gradient(180deg,#f4f4f4,#d8d8d8);border:1px solid #a8a8a8;border-radius:2px;"></div>
<div style="position:absolute;left:305.5px;top:368.5px;width:0.8px;height:3.5px;background:#666;"></div>
<div style="position:absolute;left:307px;top:368.5px;width:0.8px;height:3.5px;background:#666;"></div>
<div style="position:absolute;left:308.5px;top:368.5px;width:0.8px;height:3.5px;background:#666;"></div>
<div style="position:absolute;left:668px;top:124px;width:390px;height:257px;background:linear-gradient(180deg,#c0d0e2 0px,#cad8e8 10px,#dae5f1 20px,#e2eaf3 100%);border:1px solid #6e7884;border-radius:5px 5px 0 0;"></div>
<div style="position:absolute;left:673px;top:144px;width:380px;height:232px;background:#f0f0f0;"></div>
<svg style="left:674px;top:132px" width="11" height="11" viewBox="0 0 11 11"><rect x="0" y="0" width="10" height="10" fill="#c8c8c8" stroke="#555" stroke-width="0.8"/><path d="M0 2.5H10M0 5H10M0 7.5H10M2.5 0V10M5 0V10M7.5 0V10" stroke="#999" stroke-width="0.4"/><path d="M0.5 6 Q3 1.5 5 5 T9.5 4" stroke="#a020a0" stroke-width="1.2" fill="none"/></svg>
<div style="position:absolute;left:688px;top:132.2px;font-size:7.8px;line-height:9.8px;color:#545464;white-space:nowrap;">Analog Display (2)</div>
<div style="position:absolute;left:988.5px;top:130px;width:20px;height:11px;background:linear-gradient(180deg,#f0f4fa 0%,#dfe7f1 50%,#cdd8e6 51%,#d8e2ee 100%);border:1px solid #9aa8b8;border-radius:3px;"></div>
<div style="position:absolute;left:1009.5px;top:130px;width:20px;height:11px;background:linear-gradient(180deg,#f0f4fa 0%,#dfe7f1 50%,#cdd8e6 51%,#d8e2ee 100%);border:1px solid #9aa8b8;border-radius:3px;"></div>
<div style="position:absolute;left:1030.5px;top:130px;width:20px;height:11px;background:linear-gradient(180deg,#f0f4fa 0%,#dfe7f1 50%,#cdd8e6 51%,#d8e2ee 100%);border:1px solid #9aa8b8;border-radius:3px;"></div>
<div style="position:absolute;left:995.0px;top:134.5px;width:7.5px;height:3.5px;background:#fff;border:1px solid #666;border-radius:1.5px;"></div>
<div style="position:absolute;left:1016.0px;top:133px;width:7px;height:5px;background:#fff;border:1px solid #555;"></div>
<div style="position:absolute;left:1017.5px;top:134.5px;width:4px;height:2px;background:#555;"></div>
<svg style="left:1035.5px;top:131.5px" width="10" height="8" viewBox="0 0 10 8"><path d="M1.5 1 L8.5 7 M8.5 1 L1.5 7" stroke="#555" stroke-width="2.6"/><path d="M1.5 1 L8.5 7 M8.5 1 L1.5 7" stroke="#f8f8f8" stroke-width="1.4"/></svg>
<div style="position:absolute;left:674.5px;top:144.5px;width:377.5px;height:16px;background:#000;"></div>
<div style="position:absolute;left:678px;top:148.5px;font-size:6.9px;line-height:8.9px;color:#18d8e0;white-space:nowrap;">FIR_BP_AI-Ch0</div>
<div style="position:absolute;left:674px;top:165px;width:355px;height:6.5px;background:linear-gradient(180deg,#f6f6f6,#dadada);border:1px solid #c4c4c4;border-radius:3px;"></div>
<svg style="left:675px;top:176px" width="377" height="174" viewBox="0 0 377 174"><rect x="0" y="0" width="377" height="174" fill="#000"/><path d="M9.5 0V174M18.5 0V174M28.5 0V174M37.5 0V174M55.5 0V174M64.5 0V174M73.5 0V174M82.5 0V174M100.5 0V174M109.5 0V174M118.5 0V174M127.5 0V174M146.5 0V174M155.5 0V174M164.5 0V174M173.5 0V174M191.5 0V174M200.5 0V174M209.5 0V174M218.5 0V174M236.5 0V174M246.5 0V174M255.5 0V174M264.5 0V174M282.5 0V174M291.5 0V174M300.5 0V174M309.5 0V174M327.5 0V174M336.5 0V174M345.5 0V174M355.5 0V174M373.5 0V174" stroke="#0c460c" stroke-width="1"/><path d="M0 0.5H377M0 4.5H377M0 7.5H377M0 11.5H377M0 14.5H377M0 21.5H377M0 25.5H377M0 28.5H377M0 32.5H377M0 38.5H377M0 42.5H377M0 45.5H377M0 49.5H377M0 56.5H377M0 59.5H377M0 63.5H377M0 66.5H377M0 73.5H377M0 77.5H377M0 80.5H377M0 83.5H377M0 90.5H377M0 94.5H377M0 97.5H377M0 101.5H377M0 108.5H377M0 111.5H377M0 115.5H377M0 118.5H377M0 125.5H377M0 128.5H377M0 132.5H377M0 135.5H377M0 142.5H377M0 146.5H377M0 149.5H377M0 153.5H377M0 160.5H377M0 163.5H377M0 166.5H377M0 170.5H377" stroke="#082c08" stroke-width="1"/><path d="M0 18.5H377M0 35.5H377M0 52.5H377M0 70.5H377M0 87.5H377M0 104.5H377M0 122.5H377M0 139.5H377M0 156.5H377M0 173.5H377" stroke="#007000" stroke-width="1"/><path d="M0.5 0V174M46.5 0V174M91.5 0V174M137.5 0V174M182.5 0V174M227.5 0V174M273.5 0V174M318.5 0V174M364.5 0V174" stroke="#007000" stroke-width="1"/><path d="M0 87.5H377" stroke="#10f050" stroke-width="1"/><g transform="translate(-675 -176)"><path d="M721.5 176 V350" stroke="#c81818" stroke-width="1" stroke-dasharray="6 2"/><path d="M717.5 262.3V263.7M718.5 260.5V265.2M719.5 259.5V266.8M721.5 250.6V274.6M722.5 243.3V281.8M724.5 236.2V292.9M725.5 230.1V295.5M727.5 220.0V299.8M728.5 219.2V307.8M731.5 203.8V320.4M734.5 197.9V325.6M736.5 188.7V330.5M737.5 194.5V328.1M739.5 186.5V331.9M740.5 193.5V335.5M742.5 199.6V326.3M743.5 188.5V328.7M746.5 193.4V326.8M748.5 206.3V327.2M749.5 207.8V321.7M754.5 220.1V300.1M755.5 224.9V305.2M758.5 226.7V296.1M760.5 232.1V294.5M761.5 236.4V290.6M764.5 244.1V285.1M766.5 244.3V280.6M767.5 247.9V279.9M770.5 250.4V273.7M771.5 253.1V273.9M772.5 253.2V272.2M776.5 257.4V269.8M778.5 257.7V267.7M779.5 258.6V267.5M781.5 259.7V265.9M782.5 260.4V265.8M783.5 260.9V265.4M784.5 260.9V265.0M785.5 261.0V264.8M786.5 261.4V264.6M787.5 261.4V264.3M790.5 262.1V263.9" stroke="#00a8a8" stroke-width="1"/><path d="M723.5 236.1V289.1M729.5 210.1V313.6M730.5 209.2V317.8M733.5 190.9V326.4M735.5 193.7V336.3M741.5 186.5V339.0M745.5 192.8V332.8M747.5 193.4V334.8M751.5 211.5V319.3M752.5 212.6V313.2M753.5 217.8V309.7M757.5 223.3V301.2M759.5 231.2V295.7M763.5 237.4V287.7M765.5 243.2V284.5M769.5 249.1V276.5M773.5 252.9V272.2M775.5 255.3V270.6M777.5 256.5V269.1M788.5 261.6V264.4M789.5 261.9V264.2" stroke="#00f8f8" stroke-width="1"/><path d="M790.0 262.4 L791.0 262.3 L792.0 262.5 L793.0 262.4 L794.0 262.3 L795.0 262.5 L796.0 262.9 L797.0 262.8 L798.0 262.8 L799.0 262.4 L800.0 262.6 L801.0 262.4 L802.0 262.4 L803.0 262.3 L804.0 262.4 L805.0 262.9 L806.0 262.8 L807.0 262.8 L808.0 262.8 L809.0 262.4 L810.0 262.5 L811.0 262.7 L812.0 262.8 L813.0 262.8 L814.0 262.9 L815.0 262.3 L816.0 262.7 L817.0 262.7 L818.0 262.6 L819.0 262.4 L820.0 262.6 L821.0 262.3 L822.0 262.9 L823.0 262.9 L824.0 262.6 L825.0 262.5 L826.0 262.9 L827.0 262.7 L828.0 262.9 L829.0 262.8 L830.0 262.6 L831.0 262.5 L832.0 262.7 L833.0 262.6 L834.0 262.4 L835.0 262.5 L836.0 262.8 L837.0 262.3 L838.0 262.3 L839.0 262.7 L840.0 262.4 L841.0 262.6 L842.0 262.6 L843.0 262.5 L844.0 262.9 L845.0 262.4 L846.0 262.5 L847.0 262.4 L848.0 262.7 L849.0 262.4 L850.0 262.5 L851.0 262.8 L852.0 262.5 L853.0 262.6 L854.0 262.9 L855.0 262.3 L856.0 262.3 L857.0 262.4 L858.0 262.8 L859.0 262.7 L860.0 262.4 L861.0 262.5 L862.0 262.4 L863.0 262.6 L864.0 262.3 L865.0 262.7 L866.0 262.9 L867.0 262.9 L868.0 262.8 L869.0 262.9 L870.0 262.3 L871.0 261.5 L872.0 263.2 L873.0 262.7 L874.0 261.8 L875.0 263.2 L876.0 262.3 L877.0 262.8 L878.0 261.5 L879.0 261.2 L880.0 261.9 L881.0 261.1 L882.0 261.7 L883.0 263.2 L884.0 261.6 L885.0 260.7 L886.0 260.8 L887.0 261.1 L888.0 262.7 L889.0 261.6 L890.0 261.5 L891.0 261.0 L892.0 263.3 L893.0 261.8 L894.0 261.2 L895.0 260.9 L896.0 260.8 L897.0 261.1 L898.0 262.5 L899.0 261.1 L900.0 260.8 L901.0 262.0 L902.0 261.3 L903.0 263.3 L904.0 261.0 L905.0 262.1 L906.0 262.7 L907.0 261.8 L908.0 263.3 L909.0 261.9 L910.0 261.3 L911.0 261.8 L912.0 260.8 L913.0 261.8 L914.0 261.3 L915.0 263.0 L916.0 262.9 L917.0 262.0 L918.0 260.8 L919.0 261.4 L920.0 261.3 L921.0 261.2 L922.0 261.3 L923.0 263.0 L924.0 261.1 L925.0 260.8 L926.0 263.1 L927.0 262.2 L928.0 263.3 L929.0 261.7 L930.0 263.0 L931.0 262.4 L932.0 262.8 L933.0 262.6 L934.0 262.0 L935.0 260.9 L936.0 261.2 L937.0 263.0 L938.0 263.0 L939.0 263.1 L940.0 261.6 L941.0 262.4 L942.0 262.8 L943.0 262.4 L944.0 262.8 L945.0 262.1 L946.0 262.4 L947.0 262.5 L948.0 261.4 L949.0 263.1 L950.0 263.2 L951.0 260.9 L952.0 263.2 L953.0 263.2 L954.0 262.4 L955.0 260.8 L956.0 263.0 L957.0 261.0 L958.0 263.2 L959.0 262.4 L960.0 260.9 L961.0 261.1 L962.0 262.4 L963.0 262.2 L964.0 262.6 L965.0 263.1 L966.0 261.3 L967.0 260.7 L968.0 263.1 L969.0 260.7 L970.0 263.0 L971.0 261.0 L972.0 262.8 L973.0 262.7 L974.0 263.0 L975.0 262.1 L976.0 263.0 L977.0 261.2 L978.0 262.4 L979.0 261.6 L980.0 263.0 L981.0 262.7 L982.0 261.9 L983.0 262.1 L984.0 260.8 L985.0 260.8 L986.0 262.2 L987.0 262.0 L988.0 262.9 L989.0 262.3 L990.0 261.1 L991.0 261.6 L992.0 262.7 L993.0 262.1 L994.0 260.7 L995.0 262.9 L996.0 262.9 L997.0 260.9 L998.0 262.1 L999.0 261.7 L1000.0 262.7 L1001.0 261.5 L1002.0 261.3 L1003.0 262.0 L1004.0 263.2 L1005.0 260.9 L1006.0 261.0 L1007.0 262.3 L1008.0 263.0 L1009.0 262.0 L1010.0 262.0 L1011.0 262.3 L1012.0 262.2 L1013.0 261.7 L1014.0 262.3 L1015.0 261.8 L1016.0 261.9 L1017.0 262.2 L1018.0 261.9 L1019.0 262.2 L1020.0 261.8 L1021.0 262.3 L1022.0 261.8 L1023.0 261.8 L1024.0 262.0 L1025.0 261.9 L1026.0 262.0 L1027.0 262.3 L1028.0 262.1 L1029.0 261.7 L1030.0 261.9 L1031.0 262.0 L1032.0 262.0 L1033.0 262.2 L1034.0 262.0 L1035.0 261.7 L1036.0 261.8 L1037.0 262.2 L1038.0 261.9 L1039.0 262.2 L1040.0 262.3 L1041.0 262.1 L1042.0 262.1 L1043.0 262.1 L1044.0 261.9 L1045.0 262.3 L1046.0 262.0 L1047.0 262.3 L1048.0 261.9 L1049.0 262.3 L1050.0 262.2 L1051.0 262.1 L1052.0 262.0" stroke="#00e4e4" stroke-width="0.9" fill="none" stroke-opacity="1"/><text x="679.5" y="193.10000000000002" font-size="7.2" fill="#f8f8f8" font-family="Liberation Sans" text-anchor="start" textLength="26.8" lengthAdjust="spacingAndGlyphs" stroke="#f8f8f8" stroke-width="0.2">800 mPa</text><text x="679.5" y="210.4" font-size="7.2" fill="#f8f8f8" font-family="Liberation Sans" text-anchor="start" textLength="26.8" lengthAdjust="spacingAndGlyphs" stroke="#f8f8f8" stroke-width="0.2">600 mPa</text><text x="679.5" y="227.70000000000002" font-size="7.2" fill="#f8f8f8" font-family="Liberation Sans" text-anchor="start" textLength="26.8" lengthAdjust="spacingAndGlyphs" stroke="#f8f8f8" stroke-width="0.2">400 mPa</text><text x="679.5" y="245.0" font-size="7.2" fill="#f8f8f8" font-family="Liberation Sans" text-anchor="start" textLength="26.8" lengthAdjust="spacingAndGlyphs" stroke="#f8f8f8" stroke-width="0.2">200 mPa</text><text x="679.5" y="262.3" font-size="7.2" fill="#f8f8f8" font-family="Liberation Sans" text-anchor="start" textLength="13.8" lengthAdjust="spacingAndGlyphs" stroke="#f8f8f8" stroke-width="0.2">0 Pa</text><text x="679.5" y="279.6" font-size="7.2" fill="#f8f8f8" font-family="Liberation Sans" text-anchor="start" textLength="29.0" lengthAdjust="spacingAndGlyphs" stroke="#f8f8f8" stroke-width="0.2">-200 mPa</text><text x="679.5" y="296.90000000000003" font-size="7.2" fill="#f8f8f8" font-family="Liberation Sans" text-anchor="start" textLength="29.0" lengthAdjust="spacingAndGlyphs" stroke="#f8f8f8" stroke-width="0.2">-400 mPa</text><text x="679.5" y="314.2" font-size="7.2" fill="#f8f8f8" font-family="Liberation Sans" text-anchor="start" textLength="29.0" lengthAdjust="spacingAndGlyphs" stroke="#f8f8f8" stroke-width="0.2">-600 mPa</text><text x="679.5" y="331.50000000000006" font-size="7.2" fill="#f8f8f8" font-family="Liberation Sans" text-anchor="start" textLength="29.0" lengthAdjust="spacingAndGlyphs" stroke="#f8f8f8" stroke-width="0.2">-800 mPa</text><rect x="826.5" y="220.0" width="148" height="24.5" rx="12.75" ry="12.75" fill="none" stroke="#22b4b4" stroke-width="1"/><text x="900.5" y="236.21" font-size="11" fill="#f4f4f4" font-family="Liberation Sans" text-anchor="middle" textLength="136.9" lengthAdjust="spacingAndGlyphs">Bandpass Filtered 20 - 50 kHz</text><path d="M839 244 L832.5 263" stroke="#22b4b4" stroke-width="1"/><circle cx="839" cy="244" r="1.8" fill="#00e8e8"/><circle cx="832.5" cy="263" r="2.4" fill="#00f0f0"/></g></svg>
<div style="position:absolute;left:675px;top:350px;width:377px;height:11.7px;background:#000;"></div>
<svg style="left:0;top:0" width="1080" height="649"><text x="718.8" y="357.6" font-size="7" fill="#f4f4f4" font-family="Liberation Sans" text-anchor="middle" stroke="#f4f4f4" stroke-width="0.12">0 s</text><text x="770.8" y="357.6" font-size="7" fill="#f4f4f4" font-family="Liberation Sans" text-anchor="middle" stroke="#f4f4f4" stroke-width="0.12">500 us</text><text x="812.8" y="357.6" font-size="7" fill="#f4f4f4" font-family="Liberation Sans" text-anchor="middle" stroke="#f4f4f4" stroke-width="0.12">1 ms</text><text x="861.8" y="357.6" font-size="7" fill="#f4f4f4" font-family="Liberation Sans" text-anchor="middle" stroke="#f4f4f4" stroke-width="0.12">1.5 ms</text><text x="903.4" y="357.6" font-size="7" fill="#f4f4f4" font-family="Liberation Sans" text-anchor="middle" stroke="#f4f4f4" stroke-width="0.12">2 ms</text><text x="952.3" y="357.6" font-size="7" fill="#f4f4f4" font-family="Liberation Sans" text-anchor="middle" stroke="#f4f4f4" stroke-width="0.12">2.5 ms</text><text x="993.8" y="357.6" font-size="7" fill="#f4f4f4" font-family="Liberation Sans" text-anchor="middle" stroke="#f4f4f4" stroke-width="0.12">3 ms</text><text x="1042.3999999999999" y="357.6" font-size="7" fill="#f4f4f4" font-family="Liberation Sans" text-anchor="middle" stroke="#f4f4f4" stroke-width="0.12">3.5 ms</text></svg>
<svg style="left:677.5px;top:366.5px" width="4" height="7" viewBox="0 0 4 7"><path d="M3.5 0.5 L0.5 3.5 L3.5 6.5Z" fill="#444"/></svg>
<svg style="left:1044px;top:366.5px" width="4" height="7" viewBox="0 0 4 7"><path d="M0.5 0.5 L3.5 3.5 L0.5 6.5Z" fill="#444"/></svg>
<div style="position:absolute;left:686px;top:367.2px;width:68px;height:6.5px;background:linear-gradient(180deg,#f4f4f4,#d8d8d8);border:1px solid #a8a8a8;border-radius:2px;"></div>
<div style="position:absolute;left:718.5px;top:368.7px;width:0.8px;height:3.5px;background:#666;"></div>
<div style="position:absolute;left:720px;top:368.7px;width:0.8px;height:3.5px;background:#666;"></div>
<div style="position:absolute;left:721.5px;top:368.7px;width:0.8px;height:3.5px;background:#666;"></div>
<div style="position:absolute;left:279px;top:381px;width:389px;height:255px;background:linear-gradient(180deg,#c0d0e2 0px,#cad8e8 10px,#dae5f1 20px,#e2eaf3 100%);border:1px solid #6e7884;border-radius:5px 5px 0 0;"></div>
<div style="position:absolute;left:284px;top:401px;width:379px;height:230px;background:#f0f0f0;"></div>
<svg style="left:285px;top:389px" width="11" height="11" viewBox="0 0 11 11"><rect x="0" y="0" width="10" height="10" fill="#c8c8c8" stroke="#555" stroke-width="0.8"/><path d="M0 2.5H10M0 5H10M0 7.5H10M2.5 0V10M5 0V10M7.5 0V10" stroke="#999" stroke-width="0.4"/><path d="M0.5 6 Q3 1.5 5 5 T9.5 4" stroke="#a020a0" stroke-width="1.2" fill="none"/></svg>
<div style="position:absolute;left:299px;top:389.2px;font-size:7.8px;line-height:9.8px;color:#545464;white-space:nowrap;">Analog Display (1)</div>
<div style="position:absolute;left:598.5px;top:387px;width:20px;height:11px;background:linear-gradient(180deg,#f0f4fa 0%,#dfe7f1 50%,#cdd8e6 51%,#d8e2ee 100%);border:1px solid #9aa8b8;border-radius:3px;"></div>
<div style="position:absolute;left:619.5px;top:387px;width:20px;height:11px;background:linear-gradient(180deg,#f0f4fa 0%,#dfe7f1 50%,#cdd8e6 51%,#d8e2ee 100%);border:1px solid #9aa8b8;border-radius:3px;"></div>
<div style="position:absolute;left:640.5px;top:387px;width:20px;height:11px;background:linear-gradient(180deg,#f0f4fa 0%,#dfe7f1 50%,#cdd8e6 51%,#d8e2ee 100%);border:1px solid #9aa8b8;border-radius:3px;"></div>
<div style="position:absolute;left:605.0px;top:391.5px;width:7.5px;height:3.5px;background:#fff;border:1px solid #666;border-radius:1.5px;"></div>
<div style="position:absolute;left:626.0px;top:390px;width:7px;height:5px;background:#fff;border:1px solid #555;"></div>
<div style="position:absolute;left:627.5px;top:391.5px;width:4px;height:2px;background:#555;"></div>
<svg style="left:645.5px;top:388.5px" width="10" height="8" viewBox="0 0 10 8"><path d="M1.5 1 L8.5 7 M8.5 1 L1.5 7" stroke="#555" stroke-width="2.6"/><path d="M1.5 1 L8.5 7 M8.5 1 L1.5 7" stroke="#f8f8f8" stroke-width="1.4"/></svg>
<div style="position:absolute;left:285px;top:400.8px;width:378px;height:16px;background:#000;"></div>
<div style="position:absolute;left:288px;top:405px;width:42px;height:9.2px;border:1px solid #10b8c0;"></div>
<svg style="left:288px;top:405px" width="46" height="12" viewBox="0 0 46 12"><text x="1.5" y="7.3" font-size="7.6" fill="#18d0d8" font-family="Liberation Sans" textLength="38.5" lengthAdjust="spacingAndGlyphs">MAV_AI-Ch0</text></svg>
<div style="position:absolute;left:285.2px;top:421px;width:14.4px;height:7px;background:#d4d4d4;border:1px solid #3a3a3a;border-radius:1px;overflow:hidden;"><svg style="left:0;top:0" width="12.4" height="5" viewBox="0 0 14 7" preserveAspectRatio="none"><path d="M1.5 6.5 L5 0.5" stroke="#1a1ae8" stroke-width="1.3"/><path d="M6 3.5 H12" stroke="#111" stroke-width="1.2"/><path d="M10 3.5 L7.5 1 V6Z" fill="#111"/><path d="M11.5 1 V6" stroke="#111" stroke-width="1.3"/></svg></div>
<div style="position:absolute;left:303.0px;top:421px;width:13.7px;height:7px;background:#d4d4d4;border:1px solid #3a3a3a;border-radius:1px;overflow:hidden;"><svg style="left:0;top:0" width="11.7" height="5" viewBox="0 0 14 7" preserveAspectRatio="none"><path d="M1 6.5 L4 0.5 M10 6.5 L13 0.5" stroke="#1a1ae8" stroke-width="1.3"/><path d="M5 3.5 H10" stroke="#111" stroke-width="1.2"/><path d="M5 3.5 L7.5 1 V6Z" fill="#111"/></svg></div>
<div style="position:absolute;left:320.4px;top:421px;width:13.6px;height:7px;background:#d4d4d4;border:1px solid #3a3a3a;border-radius:1px;overflow:hidden;"><svg style="left:0;top:0" width="11.6" height="5" viewBox="0 0 14 7" preserveAspectRatio="none"><path d="M9 6.5 L12.5 0.5" stroke="#1a1ae8" stroke-width="1.3"/><path d="M2 3.5 H8" stroke="#111" stroke-width="1.2"/><path d="M9 3.5 L6.5 1 V6Z" fill="#111"/></svg></div>
<div style="position:absolute;left:337.4px;top:421px;width:14.1px;height:7px;background:#d4d4d4;border:1px solid #3a3a3a;border-radius:1px;overflow:hidden;"><svg style="left:0;top:0" width="12.1" height="5" viewBox="0 0 14 7" preserveAspectRatio="none"><path d="M1 6.5 L4 0.5 M10 6.5 L13 0.5" stroke="#1a1ae8" stroke-width="1.3"/><path d="M4 3.5 H9" stroke="#111" stroke-width="1.2"/><path d="M9.5 3.5 L7 1 V6Z" fill="#111"/></svg></div>
<div style="position:absolute;left:355.0px;top:421px;width:14px;height:7px;background:#d4d4d4;border:1px solid #3a3a3a;border-radius:1px;overflow:hidden;"><svg style="left:0;top:0" width="12.0" height="5" viewBox="0 0 14 7" preserveAspectRatio="none"><path d="M9 6.5 L12.5 0.5" stroke="#1a1ae8" stroke-width="1.3"/><path d="M2 3.5 H8" stroke="#111" stroke-width="1.2"/><path d="M3 3.5 L5.5 1 V6Z" fill="#111"/><path d="M2 1 V6" stroke="#111" stroke-width="1.3"/></svg></div>
<div style="position:absolute;left:375.0px;top:421px;width:14.6px;height:7px;background:#d4d4d4;border:1px solid #3a3a3a;border-radius:1px;overflow:hidden;"><svg style="left:0;top:0" width="12.6" height="5" viewBox="0 0 14 7" preserveAspectRatio="none"><path d="M1 3.5 H13" stroke="#111" stroke-width="1.2"/><path d="M4.5 3.5 L2 1 V6Z M9.5 3.5 L12 1 V6Z" fill="#111"/><path d="M5 1.5 L7 5 L9 1.5" stroke="#1a1ae8" stroke-width="1.4" fill="none"/></svg></div>
<div style="position:absolute;left:393.0px;top:421px;width:13.7px;height:7px;background:#d4d4d4;border:1px solid #3a3a3a;border-radius:1px;overflow:hidden;"><svg style="left:0;top:0" width="11.7" height="5" viewBox="0 0 14 7" preserveAspectRatio="none"><path d="M1 3.5 H13" stroke="#111" stroke-width="1.2"/><path d="M4.5 3.5 L2 1 V6Z M9.5 3.5 L12 1 V6Z" fill="#111"/><path d="M5.5 1 L7 3 L8.5 1" stroke="#1a1ae8" stroke-width="1.2" fill="none"/></svg></div>
<div style="position:absolute;left:410.7px;top:421px;width:229.3px;height:6.5px;background:linear-gradient(180deg,#f6f6f6,#dadada);border:1px solid #c4c4c4;border-radius:3px;"></div>
<svg style="left:285px;top:432px" width="377.5" height="185" viewBox="0 0 377.5 185"><rect x="0" y="0" width="377.5" height="185" fill="#000"/><path d="M7.5 0V185M16.5 0V185M25.5 0V185M43.5 0V185M52.5 0V185M61.5 0V185M70.5 0V185M88.5 0V185M97.5 0V185M106.5 0V185M115.5 0V185M133.5 0V185M142.5 0V185M151.5 0V185M160.5 0V185M178.5 0V185M187.5 0V185M196.5 0V185M205.5 0V185M223.5 0V185M232.5 0V185M241.5 0V185M250.5 0V185M268.5 0V185M277.5 0V185M286.5 0V185M295.5 0V185M313.5 0V185M322.5 0V185M331.5 0V185M340.5 0V185M358.5 0V185M367.5 0V185M376.5 0V185" stroke="#0c460c" stroke-width="1"/><path d="M0 0.5H377.5M0 4.5H377.5M0 8.5H377.5M0 11.5H377.5M0 15.5H377.5M0 23.5H377.5M0 26.5H377.5M0 30.5H377.5M0 34.5H377.5M0 41.5H377.5M0 45.5H377.5M0 48.5H377.5M0 52.5H377.5M0 59.5H377.5M0 63.5H377.5M0 67.5H377.5M0 70.5H377.5M0 78.5H377.5M0 81.5H377.5M0 85.5H377.5M0 89.5H377.5M0 96.5H377.5M0 100.5H377.5M0 103.5H377.5M0 107.5H377.5M0 115.5H377.5M0 118.5H377.5M0 122.5H377.5M0 126.5H377.5M0 133.5H377.5M0 137.5H377.5M0 140.5H377.5M0 144.5H377.5M0 151.5H377.5M0 155.5H377.5M0 159.5H377.5M0 162.5H377.5M0 170.5H377.5M0 173.5H377.5M0 177.5H377.5M0 181.5H377.5" stroke="#082c08" stroke-width="1"/><path d="M0 19.5H377.5M0 37.5H377.5M0 56.5H377.5M0 74.5H377.5M0 92.5H377.5M0 111.5H377.5M0 129.5H377.5M0 148.5H377.5M0 166.5H377.5M0 184.5H377.5" stroke="#007000" stroke-width="1"/><path d="M34.5 0V185M79.5 0V185M124.5 0V185M169.5 0V185M214.5 0V185M259.5 0V185M304.5 0V185M349.5 0V185" stroke="#007000" stroke-width="1"/><path d="M0 93.5H377.5" stroke="#00c400" stroke-width="1"/><g transform="translate(-285 -432)"><path d="M309.5 519.7V522.4M310.5 518.8V523.1M312.5 517.4V524.2M314.5 514.4V527.2M315.5 513.7V528.3M318.5 506.3V534.3M320.5 501.8V539.4M321.5 498.2V544.1M324.5 479.8V558.0M325.5 472.6V568.4M326.5 475.9V564.5M327.5 470.3V578.5M330.5 464.0V579.2M332.5 457.6V593.4M333.5 444.9V585.5M336.5 448.7V584.0M338.5 445.7V583.8M339.5 446.4V590.7M341.5 454.2V586.1M344.5 451.9V587.6M345.5 458.8V582.6M348.5 471.0V576.9M350.5 479.1V563.9M351.5 476.5V558.7M354.5 488.9V558.4M356.5 488.6V547.4M357.5 491.8V546.9M360.5 500.7V540.5M362.5 501.9V537.3M363.5 504.0V537.5M366.5 509.0V534.9M368.5 510.3V533.2M369.5 511.1V532.3M372.5 512.3V529.3M374.5 514.5V527.7M375.5 515.2V527.5M378.5 516.9V525.5M379.5 516.8V524.8M380.5 517.1V524.3M381.5 517.7V524.7M384.5 518.9V523.3M386.5 519.4V522.9" stroke="#00a8a8" stroke-width="1"/><path d="M307.5 520.7V521.3M308.5 520.0V522.0M311.5 518.0V523.8M313.5 516.1V526.0M316.5 510.6V532.4M317.5 509.0V534.3M319.5 501.3V539.2M323.5 482.0V560.1M329.5 457.5V589.5M331.5 450.9V587.5M334.5 444.0V598.2M335.5 446.2V596.8M337.5 440.5V599.4M342.5 444.4V598.1M343.5 443.9V597.0M347.5 462.0V579.7M349.5 468.5V574.6M353.5 482.1V560.1M355.5 485.5V558.1M359.5 495.3V545.0M361.5 500.1V543.0M365.5 506.1V535.7M367.5 506.7V533.9M371.5 511.9V530.7M373.5 513.4V529.6M377.5 515.4V526.5M382.5 517.8V524.4M383.5 518.2V524.1M385.5 518.9V523.2" stroke="#00f8f8" stroke-width="1"/><path d="M385.0 521.4 L386.0 521.6 L387.0 521.7 L388.0 522.0 L389.0 521.6 L390.0 522.0 L391.0 520.4 L392.0 521.1 L393.0 522.0 L394.0 521.5 L395.0 521.9 L396.0 520.5 L397.0 521.1 L398.0 520.7 L399.0 521.3 L400.0 521.3 L401.0 520.3 L402.0 520.7 L403.0 520.8 L404.0 521.9 L405.0 521.7 L406.0 520.6 L407.0 521.7 L408.0 520.5 L409.0 521.4 L410.0 520.5 L411.0 520.3 L412.0 521.9 L413.0 520.7 L414.0 520.7 L415.0 522.1 L416.0 521.9 L417.0 520.8 L418.0 522.0 L419.0 521.3 L420.0 521.5 L421.0 520.7 L422.0 522.0 L423.0 521.5 L424.0 522.0 L425.0 521.9 L426.0 520.8 L427.0 521.0 L428.0 520.6 L429.0 520.6 L430.0 520.4 L431.0 520.8 L432.0 521.4 L433.0 520.3 L434.0 521.5 L435.0 520.9 L436.0 520.9 L437.0 521.8 L438.0 521.2 L439.0 520.9 L440.0 521.2 L441.0 521.4 L442.0 520.8 L443.0 521.7 L444.0 520.7 L445.0 521.4 L446.0 521.5 L447.0 520.7 L448.0 521.5 L449.0 521.1 L450.0 521.3 L451.0 520.7 L452.0 520.7 L453.0 520.9 L454.0 521.7 L455.0 520.9 L456.0 521.5 L457.0 521.6 L458.0 521.6 L459.0 521.0 L460.0 521.1 L461.0 521.2 L462.0 521.5 L463.0 520.8 L464.0 521.4 L465.0 521.5 L466.0 521.6 L467.0 520.7 L468.0 521.6 L469.0 520.8 L470.0 521.0 L471.0 521.3 L472.0 521.6 L473.0 521.0 L474.0 521.6 L475.0 521.2 L476.0 521.0 L477.0 521.0 L478.0 520.9 L479.0 520.8 L480.0 520.8 L481.0 521.4 L482.0 521.7 L483.0 520.9 L484.0 520.7 L485.0 521.7 L486.0 521.2 L487.0 521.1 L488.0 520.9 L489.0 521.3 L490.0 521.5 L491.0 521.2 L492.0 521.1 L493.0 520.8 L494.0 521.6 L495.0 520.7 L496.0 521.2 L497.0 521.5 L498.0 520.8 L499.0 521.4 L500.0 521.6 L501.0 521.3 L502.0 521.5 L503.0 520.8 L504.0 521.1 L505.0 520.8 L506.0 521.5 L507.0 521.0 L508.0 521.2 L509.0 521.7 L510.0 521.6 L511.0 521.7 L512.0 521.2 L513.0 521.2 L514.0 521.4 L515.0 521.2 L516.0 521.0 L517.0 521.1 L518.0 520.8 L519.0 521.1 L520.0 521.7 L521.0 521.7 L522.0 521.3 L523.0 521.2 L524.0 521.0 L525.0 520.8 L526.0 521.0 L527.0 521.5 L528.0 521.6 L529.0 521.1 L530.0 521.5 L531.0 521.5 L532.0 521.4 L533.0 521.4 L534.0 521.5 L535.0 521.1 L536.0 521.4 L537.0 521.0 L538.0 521.2 L539.0 521.5 L540.0 521.4 L541.0 521.0 L542.0 521.6 L543.0 521.3 L544.0 521.3 L545.0 520.7 L546.0 521.2 L547.0 521.0 L548.0 521.4 L549.0 521.2 L550.0 521.5 L551.0 521.3 L552.0 521.5 L553.0 521.0 L554.0 521.3 L555.0 521.4 L556.0 521.5 L557.0 521.1 L558.0 521.5 L559.0 521.6 L560.0 521.4 L561.0 521.7 L562.0 521.7 L563.0 521.2 L564.0 521.2 L565.0 520.9 L566.0 521.5 L567.0 521.6 L568.0 521.2 L569.0 521.4 L570.0 521.4 L571.0 521.4 L572.0 520.9 L573.0 521.5 L574.0 521.3 L575.0 521.4 L576.0 521.1 L577.0 521.3 L578.0 521.5 L579.0 521.3 L580.0 521.4 L581.0 520.7 L582.0 520.9 L583.0 521.1 L584.0 521.4 L585.0 520.9 L586.0 521.4 L587.0 521.3 L588.0 520.7 L589.0 521.2 L590.0 520.9 L591.0 520.8 L592.0 520.8 L593.0 521.0 L594.0 520.9 L595.0 520.9 L596.0 520.7 L597.0 521.2 L598.0 521.1 L599.0 521.3 L600.0 521.3 L601.0 520.9 L602.0 521.6 L603.0 520.7 L604.0 521.1 L605.0 521.0 L606.0 521.1 L607.0 520.8 L608.0 521.5 L609.0 521.1 L610.0 520.7 L611.0 521.3 L612.0 520.8 L613.0 521.2 L614.0 521.0 L615.0 521.3 L616.0 521.7 L617.0 521.5 L618.0 521.1 L619.0 521.5 L620.0 521.3 L621.0 521.1 L622.0 520.8 L623.0 521.3 L624.0 521.3 L625.0 521.7 L626.0 521.7 L627.0 521.3 L628.0 521.1 L629.0 521.6 L630.0 520.7 L631.0 520.8 L632.0 521.3 L633.0 521.3 L634.0 520.8 L635.0 521.3 L636.0 521.6 L637.0 521.1 L638.0 521.1 L639.0 520.9 L640.0 521.0 L641.0 521.7 L642.0 521.1 L643.0 521.7 L644.0 521.6 L645.0 521.3 L646.0 521.0 L647.0 521.7 L648.0 521.2 L649.0 521.1 L650.0 521.0 L651.0 521.7 L652.0 521.2 L653.0 521.0 L654.0 521.2 L655.0 520.8 L656.0 521.3 L657.0 521.1 L658.0 521.0 L659.0 521.5 L660.0 521.5 L661.0 520.7 L662.0 521.2" stroke="#00e4e4" stroke-width="0.9" fill="none" stroke-opacity="1"/><text x="289.5" y="450.4" font-size="7.2" fill="#f8f8f8" font-family="Liberation Sans" text-anchor="start" textLength="26.8" lengthAdjust="spacingAndGlyphs" stroke="#f8f8f8" stroke-width="0.2">800 mPa</text><text x="289.5" y="468.8" font-size="7.2" fill="#f8f8f8" font-family="Liberation Sans" text-anchor="start" textLength="26.8" lengthAdjust="spacingAndGlyphs" stroke="#f8f8f8" stroke-width="0.2">600 mPa</text><text x="289.5" y="487.2" font-size="7.2" fill="#f8f8f8" font-family="Liberation Sans" text-anchor="start" textLength="26.8" lengthAdjust="spacingAndGlyphs" stroke="#f8f8f8" stroke-width="0.2">400 mPa</text><text x="289.5" y="505.59999999999997" font-size="7.2" fill="#f8f8f8" font-family="Liberation Sans" text-anchor="start" textLength="26.8" lengthAdjust="spacingAndGlyphs" stroke="#f8f8f8" stroke-width="0.2">200 mPa</text><text x="289.5" y="524.0" font-size="7.2" fill="#f8f8f8" font-family="Liberation Sans" text-anchor="start" textLength="13.8" lengthAdjust="spacingAndGlyphs" stroke="#f8f8f8" stroke-width="0.2">0 Pa</text><text x="289.5" y="542.4" font-size="7.2" fill="#f8f8f8" font-family="Liberation Sans" text-anchor="start" textLength="29.0" lengthAdjust="spacingAndGlyphs" stroke="#f8f8f8" stroke-width="0.2">-200 mPa</text><text x="289.5" y="560.8" font-size="7.2" fill="#f8f8f8" font-family="Liberation Sans" text-anchor="start" textLength="29.0" lengthAdjust="spacingAndGlyphs" stroke="#f8f8f8" stroke-width="0.2">-400 mPa</text><text x="289.5" y="579.1999999999999" font-size="7.2" fill="#f8f8f8" font-family="Liberation Sans" text-anchor="start" textLength="29.0" lengthAdjust="spacingAndGlyphs" stroke="#f8f8f8" stroke-width="0.2">-600 mPa</text><text x="289.5" y="597.5999999999999" font-size="7.2" fill="#f8f8f8" font-family="Liberation Sans" text-anchor="start" textLength="29.0" lengthAdjust="spacingAndGlyphs" stroke="#f8f8f8" stroke-width="0.2">-800 mPa</text><rect x="438.5" y="472.5" width="130.5" height="24.5" rx="12.75" ry="12.75" fill="none" stroke="#22b4b4" stroke-width="1"/><text x="503.75" y="488.71" font-size="11" fill="#f4f4f4" font-family="Liberation Sans" text-anchor="middle" textLength="119.7" lengthAdjust="spacingAndGlyphs">Average of Five Segments</text><path d="M451 496 L442.5 521.3" stroke="#22b4b4" stroke-width="1"/><circle cx="451" cy="496" r="1.8" fill="#00e8e8"/><circle cx="442.5" cy="521.3" r="2.4" fill="#00f0f0"/></g></svg>
<div style="position:absolute;left:285px;top:617px;width:377.5px;height:11.5px;background:#000;"></div>
<svg style="left:0;top:0" width="1080" height="649"><text x="325.1" y="624" font-size="7" fill="#f4f4f4" font-family="Liberation Sans" text-anchor="middle" stroke="#f4f4f4" stroke-width="0.12">4.671 s</text><text x="371.8" y="624" font-size="7" fill="#f4f4f4" font-family="Liberation Sans" text-anchor="middle" stroke="#f4f4f4" stroke-width="0.12">4.6715 s</text><text x="414.8" y="624" font-size="7" fill="#f4f4f4" font-family="Liberation Sans" text-anchor="middle" stroke="#f4f4f4" stroke-width="0.12">4.672 s</text><text x="460.8" y="624" font-size="7" fill="#f4f4f4" font-family="Liberation Sans" text-anchor="middle" stroke="#f4f4f4" stroke-width="0.12">4.6725 s</text><text x="504.8" y="624" font-size="7" fill="#f4f4f4" font-family="Liberation Sans" text-anchor="middle" stroke="#f4f4f4" stroke-width="0.12">4.673 s</text><text x="550.3" y="624" font-size="7" fill="#f4f4f4" font-family="Liberation Sans" text-anchor="middle" stroke="#f4f4f4" stroke-width="0.12">4.6735 s</text><text x="594.8" y="624" font-size="7" fill="#f4f4f4" font-family="Liberation Sans" text-anchor="middle" stroke="#f4f4f4" stroke-width="0.12">4.674 s</text><text x="639.8" y="624" font-size="7" fill="#f4f4f4" font-family="Liberation Sans" text-anchor="middle" stroke="#f4f4f4" stroke-width="0.12">4.675 s</text></svg>
<div style="position:absolute;left:668px;top:381px;width:390px;height:255px;background:linear-gradient(180deg,#c0d0e2 0px,#cad8e8 10px,#dae5f1 20px,#e2eaf3 100%);border:1px solid #6e7884;border-radius:5px 5px 0 0;"></div>
<div style="position:absolute;left:673px;top:401px;width:380px;height:230px;background:#f0f0f0;"></div>
<svg style="left:674px;top:389px" width="11" height="11" viewBox="0 0 11 11"><rect x="0" y="0" width="10" height="10" fill="#c8c8c8" stroke="#555" stroke-width="0.8"/><path d="M2 2 V8 H9 M2.5 7.5 L3.5 2.5 L4.5 7 L8 7.3" stroke="#a020a0" stroke-width="1" fill="none"/></svg>
<div style="position:absolute;left:688px;top:389.2px;font-size:7.8px;line-height:9.8px;color:#545464;white-space:nowrap;">FFT Display (0)</div>
<div style="position:absolute;left:988.5px;top:387px;width:20px;height:11px;background:linear-gradient(180deg,#f0f4fa 0%,#dfe7f1 50%,#cdd8e6 51%,#d8e2ee 100%);border:1px solid #9aa8b8;border-radius:3px;"></div>
<div style="position:absolute;left:1009.5px;top:387px;width:20px;height:11px;background:linear-gradient(180deg,#f0f4fa 0%,#dfe7f1 50%,#cdd8e6 51%,#d8e2ee 100%);border:1px solid #9aa8b8;border-radius:3px;"></div>
<div style="position:absolute;left:1030.5px;top:387px;width:20px;height:11px;background:linear-gradient(180deg,#f0f4fa 0%,#dfe7f1 50%,#cdd8e6 51%,#d8e2ee 100%);border:1px solid #9aa8b8;border-radius:3px;"></div>
<div style="position:absolute;left:995.0px;top:391.5px;width:7.5px;height:3.5px;background:#fff;border:1px solid #666;border-radius:1.5px;"></div>
<div style="position:absolute;left:1016.0px;top:390px;width:7px;height:5px;background:#fff;border:1px solid #555;"></div>
<div style="position:absolute;left:1017.5px;top:391.5px;width:4px;height:2px;background:#555;"></div>
<svg style="left:1035.5px;top:388.5px" width="10" height="8" viewBox="0 0 10 8"><path d="M1.5 1 L8.5 7 M8.5 1 L1.5 7" stroke="#555" stroke-width="2.6"/><path d="M1.5 1 L8.5 7 M8.5 1 L1.5 7" stroke="#f8f8f8" stroke-width="1.4"/></svg>
<div style="position:absolute;left:674.5px;top:401.8px;width:377.5px;height:16px;background:#000;"></div>
<div style="position:absolute;left:678px;top:405.5px;font-size:6.9px;line-height:8.9px;color:#18d8e0;white-space:nowrap;">FFT_AI-Ch0_1</div>
<div style="position:absolute;left:674px;top:421px;width:356.79999999999995px;height:6.5px;background:linear-gradient(180deg,#f6f6f6,#dadada);border:1px solid #c4c4c4;border-radius:3px;"></div>
<svg style="left:674.5px;top:432px" width="367.5" height="175" viewBox="0 0 367.5 175"><rect x="0" y="0" width="367.5" height="175" fill="#000"/><path d="M7.0 0V175M14.0 0V175M21.0 0V175M29.0 0V175M43.0 0V175M51.0 0V175M58.0 0V175M66.0 0V175M80.0 0V175M88.0 0V175M95.0 0V175M102.0 0V175M117.0 0V175M124.0 0V175M132.0 0V175M139.0 0V175M154.0 0V175M161.0 0V175M169.0 0V175M176.0 0V175M191.0 0V175M198.0 0V175M205.0 0V175M213.0 0V175M227.0 0V175M235.0 0V175M242.0 0V175M250.0 0V175M264.0 0V175M272.0 0V175M279.0 0V175M286.0 0V175M301.0 0V175M308.0 0V175M316.0 0V175M323.0 0V175M338.0 0V175M345.0 0V175M353.0 0V175M360.0 0V175" stroke="#0c460c" stroke-width="1"/><path d="M0 0.5H367.5M0 4.5H367.5M0 8.5H367.5M0 11.5H367.5M0 19.5H367.5M0 22.5H367.5M0 26.5H367.5M0 33.5H367.5M0 37.5H367.5M0 41.5H367.5M0 48.5H367.5M0 51.5H367.5M0 55.5H367.5M0 62.5H367.5M0 66.5H367.5M0 70.5H367.5M0 77.5H367.5M0 81.5H367.5M0 84.5H367.5M0 92.5H367.5M0 95.5H367.5M0 99.5H367.5M0 106.5H367.5M0 110.5H367.5M0 113.5H367.5M0 121.5H367.5M0 124.5H367.5M0 128.5H367.5M0 135.5H367.5M0 139.5H367.5M0 143.5H367.5M0 150.5H367.5M0 154.5H367.5M0 157.5H367.5M0 165.5H367.5M0 168.5H367.5M0 172.5H367.5" stroke="#061e06" stroke-width="1"/><path d="M0 15.5H367.5M0 30.5H367.5M0 44.5H367.5M0 59.5H367.5M0 73.5H367.5M0 88.5H367.5M0 103.5H367.5M0 117.5H367.5M0 132.5H367.5M0 146.5H367.5M0 161.5H367.5" stroke="#004a00" stroke-width="1"/><path d="M36.0 0V175M73.0 0V175M110.0 0V175M147.0 0V175M183.0 0V175M220.0 0V175M257.0 0V175M294.0 0V175M331.0 0V175M367.0 0V175" stroke="#007000" stroke-width="1"/><g transform="translate(-674.5 -432)"><path d="M674.5 441.9V472.5M675.5 473.4V516.3M676.5 473.9V496.5M677.5 487.1V495.9M678.5 488.2V518.1M679.5 503.5V518.8M680.5 494.1V517.3M681.5 489.9V512.1M682.5 506.0V522.5M683.5 495.1V517.4M685.5 499.0V504.1M686.5 487.0V502.3M688.5 494.6V509.3M690.5 489.1V515.0M691.5 493.4V513.3M692.5 484.4V500.3M693.5 495.9V501.6M694.5 510.8V520.0M696.5 502.3V522.3M697.5 499.6V530.4M698.5 518.4V536.7M699.5 510.5V519.7M700.5 505.3V528.0M701.5 519.9V536.7M702.5 521.9V537.7M703.5 525.7V549.5M704.5 512.9V540.4M705.5 524.4V530.7M706.5 514.0V544.0M707.5 519.7V545.4M708.5 526.1V538.7M709.5 536.8V544.6M710.5 514.1V532.3M711.5 514.7V537.8M712.5 517.6V528.8M716.5 524.0V543.0M717.5 518.5V531.9M718.5 525.8V538.3M719.5 534.4V547.0M720.5 520.5V530.3M721.5 513.5V527.8M722.5 518.2V527.4M723.5 524.1V536.4M724.5 524.2V535.0M725.5 517.5V539.3M726.5 515.5V538.1M728.5 514.8V533.0M729.5 520.0V540.6M731.5 515.6V550.4M732.5 512.2V543.0M733.5 540.9V553.1M735.5 512.7V538.2M736.5 507.6V528.6M737.5 504.5V532.5M738.5 496.8V510.7M739.5 487.9V520.1M740.5 506.2V513.8M741.5 486.4V512.8M743.5 472.6V503.9M744.5 484.7V502.8M745.5 464.7V485.9M746.5 445.2V487.9M747.5 444.1V478.0M748.5 443.0V459.0M749.5 451.5V467.0M750.5 450.3V467.6M751.5 466.4V471.5M752.5 458.7V480.6M754.5 472.3V478.9M755.5 487.5V496.4M757.5 478.3V489.9M758.5 487.7V491.8M759.5 496.5V507.9M761.5 489.1V508.0M762.5 493.7V502.6M764.5 496.9V503.1M766.5 491.2V512.5M767.5 498.2V519.7M768.5 517.8V533.2M769.5 508.8V524.2M770.5 510.1V521.7M772.5 510.6V526.5M773.5 519.8V523.7M774.5 505.2V516.0M775.5 502.9V517.8M776.5 508.0V515.7M777.5 501.8V513.6M778.5 505.2V508.7M779.5 508.2V517.3M780.5 503.4V515.7M781.5 515.4V522.2M782.5 512.0V523.7M783.5 513.1V524.5M784.5 516.1V529.5M785.5 518.9V521.3M786.5 519.2V530.5M787.5 522.4V526.4M788.5 532.8V536.9M789.5 520.8V535.2M791.5 526.9V535.2M792.5 536.6V554.1M794.5 529.5V557.0M795.5 531.4V544.9M796.5 541.1V557.9M797.5 539.1V561.9M798.5 535.2V546.3M799.5 530.5V547.8M800.5 534.4V547.3M801.5 534.4V560.0M802.5 535.3V557.7M803.5 537.6V558.8M805.5 545.3V562.7M806.5 545.9V554.4M807.5 532.4V546.0M808.5 539.0V551.8M809.5 545.7V556.3M810.5 537.2V557.1M811.5 537.8V552.9M812.5 533.3V550.4M813.5 527.4V540.1M815.5 539.5V547.9M816.5 530.0V540.2M817.5 526.5V542.4M818.5 517.1V538.3M819.5 526.7V535.5M820.5 521.9V530.2M821.5 517.8V532.7M822.5 516.2V530.9M823.5 519.6V527.6M824.5 531.8V544.4M825.5 530.3V542.3M826.5 520.8V534.8M828.5 521.9V536.6M829.5 526.5V555.2M830.5 528.3V556.8M831.5 529.4V557.8M832.5 548.6V557.4M833.5 533.3V556.6M834.5 530.9V545.1M835.5 536.1V547.5M838.5 533.8V553.5M839.5 537.4V562.6M840.5 541.1V555.8M841.5 536.3V548.6M842.5 544.2V557.0M843.5 532.1V564.6M844.5 533.0V548.7M845.5 533.0V551.7M846.5 541.8V564.9M847.5 555.8V567.2M848.5 540.3V560.0M849.5 533.4V557.3M850.5 554.1V563.7M851.5 552.3V563.3M853.5 536.8V549.7M854.5 541.5V562.8M855.5 549.7V561.3M856.5 537.0V560.0M858.5 535.3V548.1M859.5 543.3V562.0M861.5 541.4V548.5M862.5 532.4V547.6M863.5 537.7V565.4M864.5 535.7V556.3M865.5 533.1V551.1M866.5 540.7V557.4M867.5 552.9V562.2M868.5 554.4V567.1M869.5 547.1V556.0M870.5 539.8V559.6M871.5 537.2V551.2M874.5 540.8V559.2M876.5 540.2V549.4M877.5 552.7V561.1M878.5 540.8V554.6M879.5 541.1V554.4M880.5 537.6V557.5M882.5 538.9V554.9M883.5 537.1V564.1M884.5 556.1V561.4M885.5 547.0V556.4M886.5 542.1V548.7M887.5 539.3V561.6M888.5 542.4V551.2M889.5 547.2V559.0M890.5 542.7V552.5M891.5 543.3V561.7M892.5 545.4V557.5M894.5 544.2V564.2M895.5 543.4V549.1M896.5 544.0V549.3M897.5 538.7V549.7M898.5 537.2V565.4M899.5 553.1V566.2M900.5 544.4V566.2M901.5 546.0V564.8M902.5 542.5V550.7M903.5 552.2V564.3M904.5 543.5V566.8M905.5 546.5V555.4M906.5 549.6V560.8M907.5 547.2V563.4M908.5 541.4V553.6M909.5 553.7V561.1M910.5 547.3V565.4M911.5 538.1V551.3M912.5 557.3V564.7M915.5 555.2V565.9M916.5 555.5V569.0M917.5 556.1V567.4M918.5 541.2V551.4M919.5 555.2V562.0M920.5 543.5V551.2M921.5 558.0V562.8M922.5 535.6V556.9M923.5 547.8V560.7M924.5 538.1V550.7M926.5 536.0V556.5M928.5 546.7V550.6M929.5 549.4V562.5M930.5 549.1V565.3M931.5 555.3V568.7M932.5 556.8V565.0M934.5 555.0V569.7M936.5 538.7V564.9M937.5 542.7V561.8M938.5 542.6V554.0M939.5 545.6V556.2M940.5 539.0V555.8M942.5 548.6V555.8M943.5 547.0V554.0M944.5 544.0V557.3M945.5 560.1V563.6M946.5 556.7V563.2M947.5 541.1V564.7M949.5 542.9V560.8M950.5 546.5V563.2M952.5 545.2V557.9M953.5 556.4V565.5M954.5 542.3V564.7M955.5 544.3V569.5M956.5 549.4V556.2M957.5 559.8V568.5M958.5 541.0V556.4M959.5 548.8V552.9M960.5 547.0V569.1M961.5 537.1V553.6M962.5 548.1V558.3M963.5 549.8V569.2M964.5 545.0V554.9M965.5 548.3V569.7M966.5 555.3V564.7M967.5 544.9V564.6M968.5 550.5V563.1M969.5 542.7V556.4M970.5 541.5V563.6M971.5 555.0V564.5M972.5 548.7V569.4M974.5 546.6V568.3M976.5 556.3V567.8M977.5 550.2V570.5M978.5 546.8V562.7M979.5 540.3V565.9M980.5 556.4V565.7M981.5 544.4V559.7M983.5 559.9V565.6M984.5 548.6V562.4M985.5 550.2V569.5M986.5 547.5V566.2M987.5 540.6V562.4M989.5 546.3V565.9M992.5 559.1V571.2M995.5 539.6V555.9M996.5 541.8V555.5M997.5 559.4V569.5M999.5 547.1V557.1M1000.5 557.4V571.2M1001.5 541.0V566.6M1002.5 544.8V571.0M1003.5 550.1V555.6M1004.5 561.7V574.1M1005.5 547.7V568.5M1006.5 544.1V571.3M1007.5 541.2V568.2M1008.5 560.8V571.2M1009.5 546.6V554.3M1010.5 545.5V558.2M1011.5 552.6V564.5M1012.5 557.1V571.6M1013.5 542.8V573.6M1015.5 543.9V570.1M1016.5 542.2V573.9M1017.5 545.8V564.6M1018.5 548.6V561.1M1019.5 544.0V564.5M1020.5 539.9V560.2M1021.5 549.6V572.4M1022.5 546.2V564.6M1023.5 550.9V557.5M1026.5 548.9V567.5M1027.5 563.0V575.7M1028.5 545.6V562.2M1030.5 548.7V570.0M1031.5 548.6V571.9M1032.5 561.8V572.2M1033.5 546.3V569.9M1034.5 559.2V570.4M1035.5 554.5V573.8M1036.5 553.3V570.2M1037.5 546.2V572.6M1039.5 560.2V569.9M1040.5 551.8V558.6M1041.5 550.8V575.4" stroke="#00ffff" stroke-width="1"/><path d="M675.5 514.0V532.4M683.5 520.6V535.6M684.5 495.2V517.5M685.5 519.1V525.3M687.5 495.5V512.5M689.5 490.5V511.2M695.5 503.1V517.6M702.5 544.4V573.7M705.5 547.2V565.9M709.5 545.2V550.5M710.5 544.8V569.0M713.5 523.5V542.9M713.5 543.2V573.1M714.5 523.5V540.0M715.5 519.1V541.0M716.5 543.6V565.8M717.5 543.9V563.6M719.5 544.4V563.9M720.5 544.6V553.5M726.5 546.3V574.7M727.5 520.4V544.8M730.5 516.3V540.8M734.5 525.6V548.4M742.5 490.0V505.3M746.5 485.8V493.7M753.5 469.2V480.9M756.5 481.0V495.7M760.5 491.3V504.6M760.5 507.7V532.7M762.5 511.0V524.2M763.5 496.3V512.5M765.5 494.4V510.1M768.5 529.7V538.2M771.5 513.3V527.8M775.5 521.8V539.5M776.5 519.5V535.5M779.5 518.7V542.0M790.5 527.0V543.4M793.5 531.7V549.0M804.5 538.2V552.3M814.5 535.4V545.8M816.5 545.2V572.9M825.5 551.0V564.4M827.5 533.9V549.9M835.5 559.2V583.6M836.5 540.9V556.5M837.5 536.8V554.5M838.5 561.1V575.5M852.5 540.9V560.0M857.5 539.2V561.4M858.5 564.0V569.2M859.5 564.0V592.3M860.5 541.4V559.4M872.5 547.5V559.6M873.5 546.5V563.2M875.5 542.5V560.6M876.5 564.0V587.6M880.5 564.0V590.1M881.5 544.0V562.4M887.5 564.2V589.7M892.5 564.5V569.8M893.5 541.6V562.4M893.5 564.5V584.3M895.5 564.7V574.8M912.5 565.6V589.7M913.5 543.7V563.1M914.5 547.3V559.4M925.5 548.7V560.2M927.5 549.7V565.3M928.5 566.5V596.2M933.5 546.6V563.5M935.5 546.9V566.3M941.5 549.3V567.0M942.5 567.3V593.5M948.5 548.0V566.0M950.5 567.8V577.7M951.5 546.4V565.5M953.5 567.9V585.8M969.5 568.8V588.3M973.5 552.1V563.7M975.5 546.6V565.1M982.5 544.6V565.9M988.5 551.2V567.5M990.5 547.5V564.8M991.5 553.0V570.0M993.5 546.0V568.6M994.5 547.3V566.6M994.5 570.3V597.1M998.5 551.3V568.4M998.5 570.7V594.5M999.5 570.7V588.9M1014.5 547.9V571.5M1015.5 572.0V581.9M1024.5 552.0V566.7M1025.5 545.0V568.9M1027.5 572.9V597.8M1029.5 553.1V565.9M1038.5 553.4V572.8" stroke="#00f0f0" stroke-width="1.4"/><path d="M674.5 466.2 L675.0 511.6 L675.5 481.6 L676.0 513.2 L676.5 496.4 L677.0 510.7 L677.5 495.5 L678.0 506.9 L678.5 492.9 L679.0 507.2 L679.5 498.6 L680.0 515.8 L680.5 493.7 L681.0 511.6 L681.5 496.5 L682.0 510.2 L682.5 496.9 L683.0 518.4 L683.5 501.7 L684.0 518.6 L684.5 498.6 L685.0 516.8 L685.5 502.3 L686.0 517.8 L686.5 499.6 L687.0 509.3 L687.5 494.7 L688.0 513.7 L688.5 501.7 L689.0 503.9 L689.5 497.8 L690.0 510.2 L690.5 495.1 L691.0 502.8 L691.5 494.4 L692.0 506.7 L692.5 496.6 L693.0 510.9 L693.5 494.2 L694.0 512.8 L694.5 501.7 L695.0 521.8 L695.5 510.1 L696.0 525.6 L696.5 508.6 L697.0 527.4 L697.5 514.1 L698.0 531.9 L698.5 512.4 L699.0 531.7 L699.5 516.1 L700.0 530.2 L700.5 515.3 L701.0 527.8 L701.5 518.2 L702.0 536.9 L702.5 529.3 L703.0 533.7 L703.5 530.7 L704.0 544.9 L704.5 529.7 L705.0 540.1 L705.5 526.0 L706.0 541.3 L706.5 530.0 L707.0 545.0 L707.5 519.8 L708.0 544.6 L708.5 530.3 L709.0 543.9 L709.5 524.0 L710.0 536.5 L710.5 530.7 L711.0 542.8 L711.5 525.4 L712.0 537.2 L712.5 523.9 L713.0 533.9 L713.5 522.8 L714.0 535.4 L714.5 523.0 L715.0 538.8 L715.5 529.4 L716.0 538.1 L716.5 523.9 L717.0 534.8 L717.5 525.8 L718.0 534.1 L718.5 525.2 L719.0 534.1 L719.5 528.7 L720.0 541.5 L720.5 521.1 L721.0 534.3 L721.5 523.9 L722.0 535.0 L722.5 531.1 L723.0 538.4 L723.5 519.7 L724.0 537.0 L724.5 527.9 L725.0 544.6 L725.5 523.7 L726.0 544.9 L726.5 521.4 L727.0 536.2 L727.5 528.9 L728.0 541.6 L728.5 524.6 L729.0 535.3 L729.5 526.7 L730.0 537.2 L730.5 532.3 L731.0 548.7 L731.5 529.0 L732.0 543.9 L732.5 520.6 L733.0 536.1 L733.5 525.7 L734.0 541.1 L734.5 528.6 L735.0 546.3 L735.5 522.1 L736.0 539.3 L736.5 526.8 L737.0 528.7 L737.5 508.0 L738.0 520.4 L738.5 511.6 L739.0 520.0 L739.5 503.5 L740.0 519.6 L740.5 490.1 L741.0 510.7 L741.5 493.6 L742.0 505.9 L742.5 491.5 L743.0 504.1 L743.5 489.9 L744.0 496.3 L744.5 482.0 L745.0 486.3 L745.5 475.0 L746.0 482.6 L746.5 464.5 L747.0 474.1 L747.5 459.3 L748.0 466.2 L748.5 454.0 L749.0 468.1 L749.5 448.7 L750.0 466.4 L750.5 454.8 L751.0 464.4 L751.5 454.3 L752.0 474.1 L752.5 458.8 L753.0 479.0 L753.5 465.7 L754.0 479.9 L754.5 476.1 L755.0 491.0 L755.5 484.8 L756.0 494.1 L756.5 487.0 L757.0 497.7 L757.5 484.2 L758.0 497.5 L758.5 489.5 L759.0 495.3 L759.5 491.2 L760.0 501.9 L760.5 494.6 L761.0 499.7 L761.5 497.3 L762.0 506.5 L762.5 494.0 L763.0 501.9 L763.5 500.6 L764.0 509.8 L764.5 503.9 L765.0 514.9 L765.5 497.7 L766.0 515.8 L766.5 504.3 L767.0 525.7 L767.5 506.7 L768.0 523.5 L768.5 504.7 L769.0 529.0 L769.5 507.9 L770.0 524.7 L770.5 518.7 L771.0 523.6 L771.5 516.4 L772.0 526.9 L772.5 512.9 L773.0 523.5 L773.5 518.2 L774.0 519.4 L774.5 514.1 L775.0 519.2 L775.5 509.8 L776.0 516.8 L776.5 512.0 L777.0 512.0 L777.5 507.0 L778.0 511.5 L778.5 503.8 L779.0 513.0 L779.5 510.9 L780.0 515.8 L780.5 509.6 L781.0 521.1 L781.5 508.6 L782.0 520.3 L782.5 516.5 L783.0 525.0 L783.5 514.4 L784.0 522.6 L784.5 519.7 L785.0 526.2 L785.5 517.2 L786.0 526.3 L786.5 525.5 L787.0 531.8 L787.5 527.9 L788.0 536.0 L788.5 526.1 L789.0 535.6 L789.5 529.0 L790.0 539.1 L790.5 529.8 L791.0 541.1 L791.5 531.6 L792.0 543.9 L792.5 537.9 L793.0 548.0 L793.5 533.2 L794.0 552.7 L794.5 545.8 L795.0 560.3 L795.5 545.4 L796.0 559.2 L796.5 537.3 L797.0 558.3 L797.5 539.6 L798.0 551.7 L798.5 540.1 L799.0 559.5 L799.5 544.0 L800.0 556.3 L800.5 539.0 L801.0 556.5 L801.5 537.6 L802.0 553.1 L802.5 545.0 L803.0 559.6 L803.5 542.2 L804.0 554.1 L804.5 540.2 L805.0 548.7 L805.5 542.7 L806.0 554.7 L806.5 535.6 L807.0 551.2 L807.5 538.8 L808.0 557.8 L808.5 544.2 L809.0 549.5 L809.5 538.0 L810.0 549.3 L810.5 535.6 L811.0 547.2 L811.5 536.7 L812.0 545.7 L812.5 540.2 L813.0 543.6 L813.5 540.7 L814.0 548.9 L814.5 535.3 L815.0 544.5 L815.5 536.4 L816.0 546.5 L816.5 528.3 L817.0 541.5 L817.5 526.1 L818.0 538.3 L818.5 526.6 L819.0 531.1 L819.5 517.5 L820.0 527.5 L820.5 518.9 L821.0 527.1 L821.5 513.7 L822.0 527.0 L822.5 518.8 L823.0 528.0 L823.5 524.3 L824.0 542.7 L824.5 521.3 L825.0 536.1 L825.5 533.3 L826.0 547.5 L826.5 536.5 L827.0 545.5 L827.5 539.3 L828.0 551.4 L828.5 532.3 L829.0 546.3 L829.5 531.0 L830.0 549.5 L830.5 539.6 L831.0 551.0 L831.5 540.3 L832.0 556.1 L832.5 545.1 L833.0 549.7 L833.5 535.8 L834.0 548.2 L834.5 546.6 L835.0 550.3 L835.5 547.2 L836.0 555.2 L836.5 536.3 L837.0 554.0 L837.5 538.9 L838.0 552.7 L838.5 541.1 L839.0 551.6 L839.5 537.2 L840.0 550.3 L840.5 549.3 L841.0 555.1 L841.5 544.2 L842.0 551.8 L842.5 544.1 L843.0 561.1 L843.5 549.7 L844.0 554.3 L844.5 550.8 L845.0 560.6 L845.5 542.1 L846.0 552.8 L846.5 541.5 L847.0 554.0 L847.5 540.2 L848.0 559.1 L848.5 549.7 L849.0 557.5 L849.5 548.5 L850.0 562.4 L850.5 551.2 L851.0 558.0 L851.5 546.8 L852.0 560.0 L852.5 550.4 L853.0 559.6 L853.5 548.4 L854.0 558.6 L854.5 549.1 L855.0 561.9 L855.5 540.8 L856.0 563.1 L856.5 544.3 L857.0 559.6 L857.5 549.4 L858.0 552.6 L858.5 547.3 L859.0 559.9 L859.5 546.6 L860.0 558.2 L860.5 548.1 L861.0 557.2 L861.5 546.3 L862.0 562.1 L862.5 549.3 L863.0 559.6 L863.5 551.6 L864.0 560.0 L864.5 549.0 L865.0 559.2 L865.5 547.2 L866.0 561.1 L866.5 550.5 L867.0 558.2 L867.5 541.0 L868.0 556.9 L868.5 544.4 L869.0 562.1 L869.5 549.3 L870.0 560.4 L870.5 550.2 L871.0 558.6 L871.5 546.4 L872.0 552.9 L872.5 545.7 L873.0 561.4 L873.5 543.0 L874.0 558.5 L874.5 544.4 L875.0 555.3 L875.5 544.1 L876.0 555.4 L876.5 549.5 L877.0 555.5 L877.5 551.8 L878.0 553.2 L878.5 552.5 L879.0 562.0 L879.5 551.7 L880.0 555.8 L880.5 541.7 L881.0 561.4 L881.5 547.7 L882.0 554.8 L882.5 551.7 L883.0 556.3 L883.5 543.7 L884.0 561.7 L884.5 550.0 L885.0 554.8 L885.5 545.3 L886.0 559.6 L886.5 549.3 L887.0 562.4 L887.5 544.1 L888.0 563.6 L888.5 545.6 L889.0 555.0 L889.5 550.0 L890.0 559.7 L890.5 548.1 L891.0 559.4 L891.5 549.9 L892.0 559.9 L892.5 546.7 L893.0 557.3 L893.5 544.0 L894.0 554.6 L894.5 546.1 L895.0 554.5 L895.5 551.4 L896.0 554.1 L896.5 549.3 L897.0 559.3 L897.5 552.0 L898.0 561.1 L898.5 547.3 L899.0 556.1 L899.5 549.5 L900.0 555.1 L900.5 545.2 L901.0 563.6 L901.5 552.2 L902.0 564.4 L902.5 553.0 L903.0 560.1 L903.5 543.8 L904.0 562.0 L904.5 552.5 L905.0 554.9 L905.5 547.6 L906.0 563.4 L906.5 545.4 L907.0 557.3 L907.5 546.0 L908.0 564.0 L908.5 543.3 L909.0 555.9 L909.5 546.4 L910.0 559.4 L910.5 548.7 L911.0 564.9 L911.5 543.5 L912.0 557.7 L912.5 548.9 L913.0 555.1 L913.5 546.2 L914.0 565.4 L914.5 554.2 L915.0 560.9 L915.5 554.1 L916.0 557.4 L916.5 552.4 L917.0 563.1 L917.5 554.0 L918.0 556.9 L918.5 549.8 L919.0 565.4 L919.5 552.0 L920.0 561.5 L920.5 548.4 L921.0 564.8 L921.5 553.3 L922.0 556.7 L922.5 552.9 L923.0 558.4 L923.5 552.8 L924.0 557.7 L924.5 550.4 L925.0 565.9 L925.5 545.5 L926.0 561.0 L926.5 545.5 L927.0 556.0 L927.5 543.7 L928.0 558.4 L928.5 545.9 L929.0 564.1 L929.5 544.9 L930.0 559.8 L930.5 544.1 L931.0 555.7 L931.5 551.4 L932.0 564.0 L932.5 550.9 L933.0 562.1 L933.5 543.9 L934.0 560.2 L934.5 546.6 L935.0 563.8 L935.5 551.9 L936.0 560.2 L936.5 548.4 L937.0 555.8 L937.5 549.3 L938.0 556.0 L938.5 554.6 L939.0 556.4 L939.5 553.0 L940.0 562.5 L940.5 550.9 L941.0 558.2 L941.5 549.2 L942.0 560.3 L942.5 547.9 L943.0 563.8 L943.5 546.7 L944.0 557.6 L944.5 551.6 L945.0 557.1 L945.5 555.2 L946.0 562.6 L946.5 545.5 L947.0 566.5 L947.5 550.8 L948.0 557.5 L948.5 550.2 L949.0 565.7 L949.5 547.7 L950.0 563.5 L950.5 548.1 L951.0 557.0 L951.5 550.0 L952.0 560.8 L952.5 549.3 L953.0 566.5 L953.5 555.2 L954.0 562.3 L954.5 553.1 L955.0 566.0 L955.5 549.0 L956.0 565.1 L956.5 545.8 L957.0 559.2 L957.5 548.1 L958.0 563.5 L958.5 545.6 L959.0 567.8 L959.5 551.5 L960.0 566.1 L960.5 549.4 L961.0 567.0 L961.5 552.7 L962.0 565.5 L962.5 550.0 L963.0 561.3 L963.5 553.8 L964.0 558.5 L964.5 548.5 L965.0 561.6 L965.5 550.8 L966.0 557.7 L966.5 548.5 L967.0 559.9 L967.5 554.8 L968.0 566.5 L968.5 555.2 L969.0 567.0 L969.5 556.2 L970.0 567.9 L970.5 550.8 L971.0 559.0 L971.5 549.1 L972.0 562.1 L972.5 548.9 L973.0 557.5 L973.5 550.4 L974.0 569.0 L974.5 546.3 L975.0 561.9 L975.5 547.5 L976.0 560.7 L976.5 555.2 L977.0 563.9 L977.5 554.2 L978.0 559.0 L978.5 551.0 L979.0 563.9 L979.5 547.6 L980.0 562.1 L980.5 550.9 L981.0 567.0 L981.5 557.3 L982.0 566.2 L982.5 556.9 L983.0 563.9 L983.5 549.4 L984.0 558.0 L984.5 548.0 L985.0 567.9 L985.5 555.4 L986.0 566.8 L986.5 546.2 L987.0 564.9 L987.5 547.1 L988.0 560.2 L988.5 553.0 L989.0 564.8 L989.5 556.1 L990.0 564.0 L990.5 556.7 L991.0 568.6 L991.5 555.0 L992.0 559.4 L992.5 552.2 L993.0 558.6 L993.5 550.0 L994.0 567.7 L994.5 550.4 L995.0 569.2 L995.5 555.4 L996.0 565.3 L996.5 549.7 L997.0 562.5 L997.5 556.8 L998.0 567.6 L998.5 552.4 L999.0 562.8 L999.5 552.2 L1000.0 563.1 L1000.5 546.7 L1001.0 563.3 L1001.5 558.3 L1002.0 569.7 L1002.5 552.0 L1003.0 567.3 L1003.5 555.2 L1004.0 560.6 L1004.5 557.8 L1005.0 566.2 L1005.5 546.7 L1006.0 565.7 L1006.5 549.5 L1007.0 567.0 L1007.5 559.0 L1008.0 561.9 L1008.5 555.4 L1009.0 569.2 L1009.5 553.9 L1010.0 565.0 L1010.5 556.9 L1011.0 565.8 L1011.5 552.8 L1012.0 566.8 L1012.5 548.3 L1013.0 569.9 L1013.5 558.5 L1014.0 563.7 L1014.5 553.1 L1015.0 561.8 L1015.5 553.1 L1016.0 561.4 L1016.5 549.2 L1017.0 564.2 L1017.5 559.0 L1018.0 568.5 L1018.5 549.3 L1019.0 566.6 L1019.5 555.5 L1020.0 564.4 L1020.5 559.4 L1021.0 571.7 L1021.5 552.5 L1022.0 568.2 L1022.5 559.4 L1023.0 571.4 L1023.5 558.4 L1024.0 564.3 L1024.5 559.8 L1025.0 568.8 L1025.5 550.9 L1026.0 567.1 L1026.5 553.1 L1027.0 568.1 L1027.5 558.2 L1028.0 561.2 L1028.5 556.9 L1029.0 572.4 L1029.5 549.1 L1030.0 570.1 L1030.5 555.0 L1031.0 568.4 L1031.5 553.6 L1032.0 568.9 L1032.5 551.1 L1033.0 560.9 L1033.5 550.1 L1034.0 560.9 L1034.5 549.0 L1035.0 562.0 L1035.5 548.5 L1036.0 568.2 L1036.5 558.0 L1037.0 563.4 L1037.5 556.6 L1038.0 568.1 L1038.5 548.7 L1039.0 563.3 L1039.5 555.0 L1040.0 570.5 L1040.5 560.0 L1041.0 561.6 L1041.5 553.7 L1042.0 571.0" stroke="#00ffff" stroke-width="0.6" fill="none" stroke-opacity="1"/><text x="679.5" y="460.8" font-size="7.2" fill="#f8f8f8" font-family="Liberation Sans" text-anchor="start" textLength="28.3" lengthAdjust="spacingAndGlyphs" stroke="#f8f8f8" stroke-width="0.2">-40 dBFS</text><text x="679.5" y="489.97" font-size="7.2" fill="#f8f8f8" font-family="Liberation Sans" text-anchor="start" textLength="28.3" lengthAdjust="spacingAndGlyphs" stroke="#f8f8f8" stroke-width="0.2">-60 dBFS</text><text x="679.5" y="519.14" font-size="7.2" fill="#f8f8f8" font-family="Liberation Sans" text-anchor="start" textLength="28.3" lengthAdjust="spacingAndGlyphs" stroke="#f8f8f8" stroke-width="0.2">-80 dBFS</text><text x="679.5" y="548.31" font-size="7.2" fill="#f8f8f8" font-family="Liberation Sans" text-anchor="start" textLength="32.0" lengthAdjust="spacingAndGlyphs" stroke="#f8f8f8" stroke-width="0.2">-100 dBFS</text><text x="679.5" y="577.48" font-size="7.2" fill="#f8f8f8" font-family="Liberation Sans" text-anchor="start" textLength="32.0" lengthAdjust="spacingAndGlyphs" stroke="#f8f8f8" stroke-width="0.2">-120 dBFS</text><rect x="767.0" y="464.1" width="199.5" height="24.0" rx="12.5" ry="12.5" fill="none" stroke="#22b4b4" stroke-width="1"/><text x="866.75" y="480.06" font-size="11" fill="#f4f4f4" font-family="Liberation Sans" text-anchor="middle" textLength="189.3" lengthAdjust="spacingAndGlyphs">FFT Showing the 40 kHz Signal Spectrum</text><path d="M954 487.4 L878 545" stroke="#22b4b4" stroke-width="1"/><circle cx="954" cy="487.4" r="1.8" fill="#00e8e8"/><circle cx="878" cy="545" r="2.4" fill="#00f0f0"/></g></svg>
<div style="position:absolute;left:674.5px;top:607px;width:367.5px;height:12.5px;background:#000;"></div>
<svg style="left:0;top:0" width="1080" height="649"><text x="715.8" y="614.8" font-size="7" fill="#f4f4f4" font-family="Liberation Sans" text-anchor="middle" stroke="#f4f4f4" stroke-width="0.12">20 kHz</text><text x="752.8" y="614.8" font-size="7" fill="#f4f4f4" font-family="Liberation Sans" text-anchor="middle" stroke="#f4f4f4" stroke-width="0.12">40 kHz</text><text x="789.4" y="614.8" font-size="7" fill="#f4f4f4" font-family="Liberation Sans" text-anchor="middle" stroke="#f4f4f4" stroke-width="0.12">60 kHz</text><text x="825.5999999999999" y="614.8" font-size="7" fill="#f4f4f4" font-family="Liberation Sans" text-anchor="middle" stroke="#f4f4f4" stroke-width="0.12">80 kHz</text><text x="864.8" y="614.8" font-size="7" fill="#f4f4f4" font-family="Liberation Sans" text-anchor="middle" stroke="#f4f4f4" stroke-width="0.12">100 kHz</text><text x="902.5" y="614.8" font-size="7" fill="#f4f4f4" font-family="Liberation Sans" text-anchor="middle" stroke="#f4f4f4" stroke-width="0.12">120 kHz</text><text x="939.4" y="614.8" font-size="7" fill="#f4f4f4" font-family="Liberation Sans" text-anchor="middle" stroke="#f4f4f4" stroke-width="0.12">140 kHz</text><text x="975.5" y="614.8" font-size="7" fill="#f4f4f4" font-family="Liberation Sans" text-anchor="middle" stroke="#f4f4f4" stroke-width="0.12">160 kHz</text><text x="1011.8" y="614.8" font-size="7" fill="#f4f4f4" font-family="Liberation Sans" text-anchor="middle" stroke="#f4f4f4" stroke-width="0.12">180 kHz</text></svg>
<div style="position:absolute;left:1042px;top:432px;width:10px;height:187.5px;background:#f0f0f0;border-left:1px solid #e4e4e4;"></div>
<svg style="left:1043.5px;top:435px" width="7" height="4" viewBox="0 0 7 4"><path d="M0.5 3.5 L3.5 0.5 L6.5 3.5Z" fill="#555"/></svg>
<svg style="left:1043.5px;top:612.5px" width="7" height="4" viewBox="0 0 7 4"><path d="M0.5 0.5 L3.5 3.5 L6.5 0.5Z" fill="#555"/></svg>
<div style="position:absolute;left:1043px;top:463.6px;width:8px;height:119.0px;background:linear-gradient(90deg,#eaeaea,#dcdcdc);border:1px solid #b4b4b4;border-radius:2px;"></div>
<div style="position:absolute;left:1045px;top:521.6px;width:4px;height:0.8px;background:#777;"></div>
<div style="position:absolute;left:1045px;top:523.1px;width:4px;height:0.8px;background:#777;"></div>
<div style="position:absolute;left:1045px;top:524.6px;width:4px;height:0.8px;background:#777;"></div>
<svg style="left:677.5px;top:624px" width="4" height="7" viewBox="0 0 4 7"><path d="M3.5 0.5 L0.5 3.5 L3.5 6.5Z" fill="#444"/></svg>
<svg style="left:1034px;top:624px" width="4" height="7" viewBox="0 0 4 7"><path d="M0.5 0.5 L3.5 3.5 L0.5 6.5Z" fill="#444"/></svg>
<div style="position:absolute;left:686px;top:624.5px;width:33px;height:6.5px;background:linear-gradient(180deg,#f4f4f4,#d8d8d8);border:1px solid #a8a8a8;border-radius:2px;"></div>
<div style="position:absolute;left:701.0px;top:626px;width:0.8px;height:3.5px;background:#666;"></div>
<div style="position:absolute;left:702.5px;top:626px;width:0.8px;height:3.5px;background:#666;"></div>
<div style="position:absolute;left:704.0px;top:626px;width:0.8px;height:3.5px;background:#666;"></div>
</body></html>
